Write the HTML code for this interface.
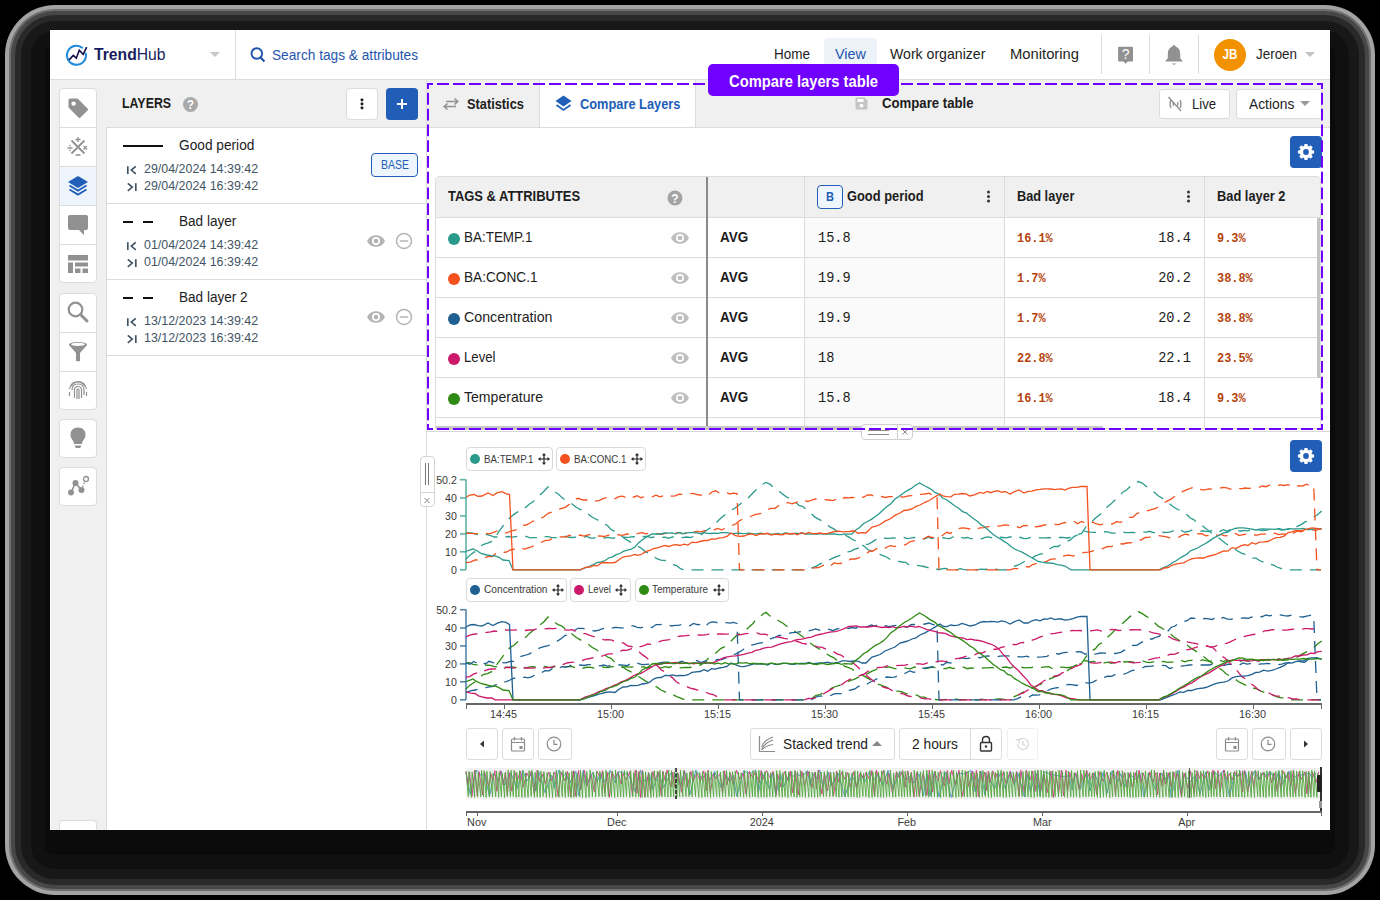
<!DOCTYPE html>
<html><head><meta charset="utf-8"><title>TrendHub</title>
<style>
html,body{margin:0;padding:0;}
body{width:1380px;height:900px;background:#000;position:relative;overflow:hidden;font-family:'Liberation Sans',sans-serif;}
body>div,body>span,body>svg{position:absolute;}
.t{white-space:nowrap;line-height:normal;display:inline-block;}
</style></head><body>
<div style="left:5px;top:5px;width:1370px;height:890px;border-radius:50px;background:rgb(163,163,163);"></div>
<div style="left:9px;top:9px;width:1362px;height:882px;border-radius:46px;background:rgb(110,110,110);"></div>
<div style="left:11px;top:11px;width:1358px;height:878px;border-radius:44px;background:rgb(71,71,71);"></div>
<div style="left:15px;top:15px;width:1350px;height:870px;border-radius:40px;background:rgb(41,41,41);"></div>
<div style="left:21px;top:21px;width:1338px;height:858px;border-radius:34px;background:rgb(24,24,24);"></div>
<div style="left:31px;top:31px;width:1318px;height:838px;border-radius:24px;background:rgb(16,16,16);"></div>
<div style="left:45px;top:45px;width:1290px;height:810px;border-radius:10px;background:rgb(11,11,11);"></div>
<div style="left:50px;top:30px;width:1280px;height:800px;background:#fff;"></div>
<div style="left:50px;top:79px;width:1280px;height:1px;background:#dcdcdc;"></div>
<svg style="left:64px;top:43px;" width="26" height="26" viewBox="0 0 26 26"><path d="M21.63 9.68 A9.50 9.50 0 1 1 18.73 5.13" fill="none" stroke="#1f8ad8" stroke-width="2"/><path d="M5.10 16.90 L9.30 12.40 L12.30 15.20 L15.30 7.20 L19.20 11.30 L22.70 4.20" fill="none" stroke="#120f4a" stroke-width="1.6"/></svg>
<span id="logo" class="t" style="left:94.2px;top:45.56px;font-size:16.00px;color:#171d5e;font-weight:400;font-family:'Liberation Sans',sans-serif;transform-origin:0 0;transform:scaleX(0.9805);"><b style="font-weight:700">Trend</b>Hub</span>
<svg style="left:209px;top:51px;" width="12" height="7" viewBox="0 0 12 7"><path d="M1 1 L11 1 L6 6 Z" fill="#c8c8c8"/></svg>
<div style="left:235px;top:30px;width:1px;height:49px;background:#dcdcdc;"></div>
<svg style="left:249px;top:46px;" width="17" height="17" viewBox="0 0 17 17"><circle cx="7.8" cy="7.5" r="5.3" fill="none" stroke="#1f56ad" stroke-width="1.9"/><path d="M11.6 11.4 L15.4 15.4" stroke="#1f56ad" stroke-width="2.2"/></svg>
<span id="search" class="t" style="left:271.7px;top:47.14px;font-size:14.60px;color:#1f56ad;font-weight:400;font-family:'Liberation Sans',sans-serif;transform-origin:0 0;transform:scaleX(0.9374);">Search tags &amp; attributes</span>
<div style="left:824px;top:38px;width:53px;height:41px;background:#eef3f9;border-radius:4px 4px 0 0;"></div>
<span id="nav_home" class="t" style="left:774.1px;top:45.84px;font-size:14.60px;color:#1d1d1d;font-weight:400;font-family:'Liberation Sans',sans-serif;transform-origin:0 0;transform:scaleX(0.9272);">Home</span>
<span id="nav_view" class="t" style="left:835.0px;top:45.84px;font-size:14.60px;color:#1f56ad;font-weight:400;font-family:'Liberation Sans',sans-serif;transform-origin:0 0;transform:scaleX(0.9881);">View</span>
<span id="nav_work" class="t" style="left:890.1px;top:45.84px;font-size:14.60px;color:#1d1d1d;font-weight:400;font-family:'Liberation Sans',sans-serif;transform-origin:0 0;transform:scaleX(0.9667);">Work organizer</span>
<span id="nav_mon" class="t" style="left:1010.2px;top:45.84px;font-size:14.60px;color:#1d1d1d;font-weight:400;font-family:'Liberation Sans',sans-serif;transform-origin:0 0;transform:scaleX(1.0126);">Monitoring</span>
<div style="left:1101px;top:35px;width:1px;height:39px;background:#dcdcdc;"></div>
<div style="left:1149px;top:35px;width:1px;height:39px;background:#dcdcdc;"></div>
<div style="left:1198px;top:35px;width:1px;height:39px;background:#dcdcdc;"></div>
<svg style="left:1116px;top:45px;" width="20" height="21" viewBox="0 0 20 21"><path d="M2.1 2.8 Q2.1 1.8 3.1 1.8 L16 1.8 Q17 1.8 17 2.8 L17 15.4 Q17 16.4 16 16.4 L11.7 16.4 L9.6 18.8 L7.5 16.4 L3.1 16.4 Q2.1 16.4 2.1 15.4 Z" fill="#919191"/><text x="9.6" y="14.2" font-family="Liberation Sans" font-weight="400" font-size="14" fill="#fff" text-anchor="middle">?</text></svg>
<svg style="left:1163px;top:43px;" width="22" height="23" viewBox="0 0 22 23"><path d="M11 1.8 Q12.2 2.6 13 3.8 Q17.2 5.2 17.2 11 L17.2 15.2 L20 18.6 L2 18.6 L4.8 15.2 L4.8 11 Q4.8 5.2 9 3.8 Q9.8 2.6 11 1.8 Z" fill="#919191"/><path d="M8.8 20.4 L13.2 20.4 L11 22 Z" fill="#919191"/></svg>
<svg style="left:1213px;top:38px;" width="34" height="34" viewBox="0 0 34 34"><circle cx="17" cy="17" r="16" fill="#f39200"/></svg>
<span id="jb" class="t" style="left:1230.0px;top:46.24px;font-size:14.60px;color:#fff;font-weight:700;font-family:'Liberation Sans',sans-serif;transform:translateX(-50%) scaleX(0.7933)">JB</span>
<span id="jeroen" class="t" style="left:1256.0px;top:45.84px;font-size:14.60px;color:#1d1d1d;font-weight:400;font-family:'Liberation Sans',sans-serif;transform-origin:0 0;transform:scaleX(0.9188);">Jeroen</span>
<svg style="left:1304px;top:51px;" width="12" height="7" viewBox="0 0 12 7"><path d="M1 1 L11 1 L6 6 Z" fill="#c3c3c3"/></svg>
<div style="left:51px;top:80px;width:56px;height:750px;background:#f0f0f0;"></div>
<div style="left:106px;top:127px;width:1px;height:703px;background:#dcdcdc;"></div>
<div style="left:59px;top:88px;width:38px;height:195px;background:#fff;border:1px solid #dcdcdc;border-radius:4px;box-sizing:border-box;"></div>
<div style="left:59px;top:127px;width:38px;height:1px;background:#dcdcdc;"></div>
<div style="left:59px;top:166px;width:38px;height:1px;background:#dcdcdc;"></div>
<div style="left:59px;top:205px;width:38px;height:1px;background:#dcdcdc;"></div>
<div style="left:59px;top:244px;width:38px;height:1px;background:#dcdcdc;"></div>
<div style="left:60px;top:167px;width:36px;height:38px;background:#eef4fb;"></div>
<div style="left:59px;top:292.5px;width:38px;height:117px;background:#fff;border:1px solid #dcdcdc;border-radius:4px;box-sizing:border-box;"></div>
<div style="left:59px;top:331.5px;width:38px;height:1px;background:#dcdcdc;"></div>
<div style="left:59px;top:370.5px;width:38px;height:1px;background:#dcdcdc;"></div>
<div style="left:59px;top:418.5px;width:38px;height:39px;background:#fff;border:1px solid #dcdcdc;border-radius:4px;box-sizing:border-box;"></div>
<div style="left:59px;top:466.5px;width:38px;height:39px;background:#fff;border:1px solid #dcdcdc;border-radius:4px;box-sizing:border-box;"></div>
<div style="left:59px;top:820px;width:38px;height:10px;background:#fff;border:1px solid #dcdcdc;border-radius:4px 4px 0 0;border-bottom:0;box-sizing:border-box;"></div>
<svg style="left:67px;top:97px;" width="22" height="22" viewBox="0 0 22 22"><path d="M1 2.5 Q1 1 2.5 1 L10 1 L20.3 11.3 Q21 12 20.3 12.7 L12.7 20.3 Q12 21 11.3 20.3 L1 10 Z" fill="#919191" transform="translate(0.5,0.5)"/><circle cx="6.6" cy="6.6" r="2.2" fill="#fff"/></svg>
<svg style="left:66px;top:136px;" width="24" height="24" viewBox="0 0 24 24"><path d="M5.5 4.5 L18.5 17.5 M18.5 4.5 L5.5 17.5" stroke="#919191" stroke-width="1.8"/><path d="M12 1 L12 6 M9.5 3.5 L14.5 3.5 M9.5 19 L14.5 19 M1.5 12 L6.5 12 M17.5 10 L21 13.5 M21 10 L17.5 13.5" stroke="#919191" stroke-width="1.3"/><circle cx="4" cy="9.6" r="0.8" fill="#919191"/><circle cx="4" cy="14.4" r="0.8" fill="#919191"/></svg>
<svg style="left:67px;top:175px;" width="22" height="22" viewBox="0 0 22 22"><path d="M11 1 L21 7 L11 13 L1 7 Z" fill="#215eb8"/><path d="M2.5 10.5 L11 15.6 L19.5 10.5 M2.5 14.5 L11 19.6 L19.5 14.5" fill="none" stroke="#215eb8" stroke-width="1.8"/></svg>
<svg style="left:67px;top:214px;" width="22" height="22" viewBox="0 0 22 22"><path d="M1 3 Q1 1 3 1 L19 1 Q21 1 21 3 L21 14 Q21 16 19 16 L17 16 L17 21 L12 16 L3 16 Q1 16 1 14 Z" fill="#919191"/></svg>
<svg style="left:67px;top:254px;" width="22" height="20" viewBox="0 0 22 20"><path d="M1 1 L21 1 L21 6.5 L1 6.5 Z M1 8.5 L6 8.5 L6 19 L1 19 Z M8 8.5 L21 8.5 L21 12.5 L8 12.5 Z M8 14.5 L13.5 14.5 L13.5 19 L8 19 Z M15.5 14.5 L21 14.5 L21 19 L15.5 19 Z" fill="#919191"/></svg>
<svg style="left:66px;top:300px;" width="24" height="24" viewBox="0 0 24 24"><circle cx="9.5" cy="9.5" r="6.8" fill="none" stroke="#919191" stroke-width="2.2"/><path d="M14.5 14.5 L21 21" stroke="#919191" stroke-width="3" stroke-linecap="round"/></svg>
<svg style="left:66px;top:340px;" width="24" height="24" viewBox="0 0 24 24"><ellipse cx="12" cy="4.5" rx="9" ry="2.6" fill="#919191"/><path d="M3 4.5 Q12 10 12 12 L12 21 Q12 22 13 21.5 L13 12 Q13 10 21 4.5" fill="#919191"/><path d="M3 5 L10 13 L10 21 L14 21 L14 13 L21 5 Z" fill="#919191"/><ellipse cx="12" cy="4.3" rx="7" ry="1.6" fill="#fff"/></svg>
<svg style="left:66px;top:378px;" width="24" height="24" viewBox="0 0 24 24"><g fill="none" stroke="#919191" stroke-width="1.2"><path d="M5 8 Q12 0 19 8"/><path d="M3.5 11 Q5 3.5 12 3.5 Q19 3.5 20.5 11"/><path d="M6 12 Q6 6 12 6 Q18 6 18 12 L18 17"/><path d="M8.5 20 L8.5 12 Q8.5 8.5 12 8.5 Q15.5 8.5 15.5 12 L15.5 20"/><path d="M11 21 L11 12 Q11 11 12 11 Q13 11 13 12 L13 21"/><path d="M3.5 14 L3.5 18"/><path d="M20.5 14 L20.5 18"/></g></svg>
<svg style="left:66px;top:426px;" width="24" height="24" viewBox="0 0 24 24"><path d="M12 1.5 Q19.5 1.5 19.5 9 Q19.5 12.5 16.5 15.5 L16 18 L8 18 L7.5 15.5 Q4.5 12.5 4.5 9 Q4.5 1.5 12 1.5 Z" fill="#919191"/><path d="M8.5 19.5 L15.5 19.5 L14 22 L10 22 Z" fill="#919191"/></svg>
<svg style="left:66px;top:474px;" width="24" height="24" viewBox="0 0 24 24"><g fill="#919191"><circle cx="5" cy="18.5" r="3"/><circle cx="9.5" cy="9" r="3"/><circle cx="15.5" cy="16" r="3"/></g><circle cx="20" cy="5" r="2.5" fill="none" stroke="#919191" stroke-width="1.3"/><path d="M5 18.5 L9.5 9 L15.5 16" stroke="#919191" stroke-width="1.6" fill="none"/><path d="M15.5 16 L19 7" stroke="#919191" stroke-width="1.3" stroke-dasharray="1.6 1.6" fill="none"/></svg>
<div style="left:107px;top:80px;width:319px;height:47px;background:#f0f0f0;"></div>
<div style="left:107px;top:127px;width:319px;height:1px;background:#dcdcdc;"></div>
<div style="left:426px;top:80px;width:1px;height:750px;background:#dcdcdc;"></div>
<span id="layers" class="t" style="left:122.2px;top:94.66px;font-size:14.80px;color:#1d1d1d;font-weight:700;font-family:'Liberation Sans',sans-serif;transform-origin:0 0;transform:scaleX(0.8368);">LAYERS</span>
<svg style="left:182px;top:96px;" width="17" height="17" viewBox="0 0 17 17"><circle cx="8.5" cy="8.5" r="7.5" fill="#a9a9a9"/><text x="8.5" y="13" font-family="Liberation Sans" font-weight="700" font-size="12" fill="#fff" text-anchor="middle">?</text></svg>
<div style="left:346px;top:88px;width:31.5px;height:31.5px;background:#fff;border:1px solid #dcdcdc;border-radius:4px;box-sizing:border-box;"></div>
<svg style="left:359px;top:96px;" width="6" height="16" viewBox="0 0 6 16"><rect x="1.7" y="2.6" width="2.6" height="2.6" rx="0.6" fill="#1a1a1a"/><rect x="1.7" y="6.6" width="2.6" height="2.6" rx="0.6" fill="#1a1a1a"/><rect x="1.7" y="10.6" width="2.6" height="2.6" rx="0.6" fill="#1a1a1a"/></svg>
<div style="left:386px;top:88px;width:32px;height:32px;background:#215eb8;border-radius:4px;"></div>
<svg style="left:394px;top:96px;" width="16" height="16" viewBox="0 0 16 16"><path d="M8 3 L8 13 M3 8 L13 8" stroke="#fff" stroke-width="2"/></svg>
<div style="left:107px;top:203px;width:319px;height:1px;background:#dcdcdc;"></div>
<div style="left:107px;top:279px;width:319px;height:1px;background:#dcdcdc;"></div>
<div style="left:107px;top:355px;width:319px;height:1px;background:#dcdcdc;"></div>
<div style="left:122.7px;top:144.6px;width:40.3px;height:2.5px;background:#111;"></div>
<div style="left:123px;top:220.8px;width:10px;height:2px;background:#111;"></div>
<div style="left:143px;top:220.8px;width:10px;height:2px;background:#111;"></div>
<div style="left:123px;top:296.8px;width:10px;height:2px;background:#111;"></div>
<div style="left:143px;top:296.8px;width:10px;height:2px;background:#111;"></div>
<span id="lname0" class="t" style="left:179.4px;top:136.39px;font-size:15.20px;color:#1d1d1d;font-weight:400;font-family:'Liberation Sans',sans-serif;transform-origin:0 0;transform:scaleX(0.9020);">Good period</span>
<span id="ld1_0" class="t" style="left:144.3px;top:161.32px;font-size:13.20px;color:#435465;font-weight:400;font-family:'Liberation Sans',sans-serif;transform-origin:0 0;transform:scaleX(0.9430);">29/04/2024 14:39:42</span>
<span id="ld2_0" class="t" style="left:144.3px;top:178.12px;font-size:13.20px;color:#435465;font-weight:400;font-family:'Liberation Sans',sans-serif;transform-origin:0 0;transform:scaleX(0.9430);">29/04/2024 16:39:42</span>
<svg style="left:126px;top:165px;" width="12" height="10" viewBox="0 0 12 10"><path d="M1.8 1.2 L1.8 9" stroke="#435465" stroke-width="1.7"/><path d="M9.8 1.3 L5.3 5.1 L9.8 8.9" fill="none" stroke="#435465" stroke-width="1.6"/></svg>
<svg style="left:126px;top:182px;" width="12" height="10" viewBox="0 0 12 10"><path d="M9.8 1.2 L9.8 9" stroke="#435465" stroke-width="1.7"/><path d="M1.8 1.3 L6.3 5.1 L1.8 8.9" fill="none" stroke="#435465" stroke-width="1.6"/></svg>
<span id="lname1" class="t" style="left:179.4px;top:212.39px;font-size:15.20px;color:#1d1d1d;font-weight:400;font-family:'Liberation Sans',sans-serif;transform-origin:0 0;transform:scaleX(0.8944);">Bad layer</span>
<span id="ld1_1" class="t" style="left:144.3px;top:237.32px;font-size:13.20px;color:#435465;font-weight:400;font-family:'Liberation Sans',sans-serif;transform-origin:0 0;transform:scaleX(0.9430);">01/04/2024 14:39:42</span>
<span id="ld2_1" class="t" style="left:144.3px;top:254.12px;font-size:13.20px;color:#435465;font-weight:400;font-family:'Liberation Sans',sans-serif;transform-origin:0 0;transform:scaleX(0.9430);">01/04/2024 16:39:42</span>
<svg style="left:126px;top:241px;" width="12" height="10" viewBox="0 0 12 10"><path d="M1.8 1.2 L1.8 9" stroke="#435465" stroke-width="1.7"/><path d="M9.8 1.3 L5.3 5.1 L9.8 8.9" fill="none" stroke="#435465" stroke-width="1.6"/></svg>
<svg style="left:126px;top:258px;" width="12" height="10" viewBox="0 0 12 10"><path d="M9.8 1.2 L9.8 9" stroke="#435465" stroke-width="1.7"/><path d="M1.8 1.3 L6.3 5.1 L1.8 8.9" fill="none" stroke="#435465" stroke-width="1.6"/></svg>
<span id="lname2" class="t" style="left:179.4px;top:288.39px;font-size:15.20px;color:#1d1d1d;font-weight:400;font-family:'Liberation Sans',sans-serif;transform-origin:0 0;transform:scaleX(0.8929);">Bad layer 2</span>
<span id="ld1_2" class="t" style="left:144.3px;top:313.32px;font-size:13.20px;color:#435465;font-weight:400;font-family:'Liberation Sans',sans-serif;transform-origin:0 0;transform:scaleX(0.9430);">13/12/2023 14:39:42</span>
<span id="ld2_2" class="t" style="left:144.3px;top:330.12px;font-size:13.20px;color:#435465;font-weight:400;font-family:'Liberation Sans',sans-serif;transform-origin:0 0;transform:scaleX(0.9430);">13/12/2023 16:39:42</span>
<svg style="left:126px;top:317px;" width="12" height="10" viewBox="0 0 12 10"><path d="M1.8 1.2 L1.8 9" stroke="#435465" stroke-width="1.7"/><path d="M9.8 1.3 L5.3 5.1 L9.8 8.9" fill="none" stroke="#435465" stroke-width="1.6"/></svg>
<svg style="left:126px;top:334px;" width="12" height="10" viewBox="0 0 12 10"><path d="M9.8 1.2 L9.8 9" stroke="#435465" stroke-width="1.7"/><path d="M1.8 1.3 L6.3 5.1 L1.8 8.9" fill="none" stroke="#435465" stroke-width="1.6"/></svg>
<div style="left:371px;top:153px;width:47px;height:24px;background:#eff5fc;border:1.5px solid #215eb8;border-radius:4px;box-sizing:border-box;"></div>
<span id="base" class="t" style="left:394.5px;top:158.07px;font-size:12.60px;color:#215eb8;font-weight:400;font-family:'Liberation Sans',sans-serif;transform:translateX(-50%) scaleX(0.8331)">BASE</span>
<svg style="left:366px;top:234px;" width="20" height="14" viewBox="0 0 20 14"><path d="M1 7 C4.5 -0.8 15.5 -0.8 19 7 C15.5 14.8 4.5 14.8 1 7 Z" fill="#b4b4b4"/><circle cx="10" cy="7" r="4" fill="#fff"/><circle cx="10" cy="7" r="2.3" fill="#b4b4b4"/></svg>
<svg style="left:394px;top:231px;" width="20" height="20" viewBox="0 0 20 20"><circle cx="10" cy="10" r="7.5" fill="none" stroke="#b4b4b4" stroke-width="1.5"/><path d="M5.8 10 L14.2 10" stroke="#b4b4b4" stroke-width="1.5"/></svg>
<svg style="left:366px;top:310px;" width="20" height="14" viewBox="0 0 20 14"><path d="M1 7 C4.5 -0.8 15.5 -0.8 19 7 C15.5 14.8 4.5 14.8 1 7 Z" fill="#b4b4b4"/><circle cx="10" cy="7" r="4" fill="#fff"/><circle cx="10" cy="7" r="2.3" fill="#b4b4b4"/></svg>
<svg style="left:394px;top:307px;" width="20" height="20" viewBox="0 0 20 20"><circle cx="10" cy="10" r="7.5" fill="none" stroke="#b4b4b4" stroke-width="1.5"/><path d="M5.8 10 L14.2 10" stroke="#b4b4b4" stroke-width="1.5"/></svg>
<div style="left:427px;top:80px;width:903px;height:47px;background:#f0f0f0;"></div>
<div style="left:427px;top:127px;width:903px;height:1px;background:#dcdcdc;"></div>
<div style="left:540px;top:80px;width:155px;height:47px;background:#fff;"></div>
<div style="left:539px;top:80px;width:1px;height:47px;background:#dcdcdc;"></div>
<div style="left:695px;top:80px;width:1px;height:47px;background:#dcdcdc;"></div>
<svg style="left:442px;top:95px;" width="18" height="18" viewBox="0 0 18 18"><path d="M4 6.5 L15.5 6.5 M12.5 3.5 L15.8 6.5 L12.5 9.5 M14 11.5 L2.5 11.5 M5.5 8.5 L2.2 11.5 L5.5 14.5" fill="none" stroke="#939393" stroke-width="1.6"/></svg>
<span id="tab_stat" class="t" style="left:467.4px;top:96.06px;font-size:14.80px;color:#1d1d1d;font-weight:700;font-family:'Liberation Sans',sans-serif;transform-origin:0 0;transform:scaleX(0.8648);">Statistics</span>
<svg style="left:555px;top:95px;" width="18" height="18" viewBox="0 0 18 18"><path d="M8.5 0.5 L16.5 6 L8.5 11.5 L0.5 6 Z" fill="#215eb8"/><path d="M1.5 10 L8.5 15 L15.5 10" fill="none" stroke="#215eb8" stroke-width="1.8"/></svg>
<span id="tab_cmp" class="t" style="left:579.8px;top:96.06px;font-size:14.80px;color:#215eb8;font-weight:700;font-family:'Liberation Sans',sans-serif;transform-origin:0 0;transform:scaleX(0.8657);">Compare Layers</span>
<svg style="left:855px;top:97px;" width="13" height="13" viewBox="0 0 13 13"><path d="M0.5 1.5 Q0.5 0.5 1.5 0.5 L9.5 0.5 L12.5 3.5 L12.5 11.5 Q12.5 12.5 11.5 12.5 L1.5 12.5 Q0.5 12.5 0.5 11.5 Z" fill="#c4c4c4"/><rect x="2.5" y="2" width="6" height="3" fill="#fff"/><circle cx="6.5" cy="8.6" r="1.9" fill="#fff"/></svg>
<span id="tab_ct" class="t" style="left:881.7px;top:94.76px;font-size:14.80px;color:#1d1d1d;font-weight:700;font-family:'Liberation Sans',sans-serif;transform-origin:0 0;transform:scaleX(0.8911);">Compare table</span>
<div style="left:1158.5px;top:89px;width:71px;height:30px;background:#fff;border:1px solid #dcdcdc;border-radius:3px;box-sizing:border-box;"></div>
<svg style="left:1167px;top:96px;" width="17" height="16" viewBox="0 0 17 16"><g fill="none" stroke="#8f8f8f" stroke-width="1.3"><path d="M4 4 Q2 8 4 12"/><path d="M13 4 Q15 8 13 12"/><path d="M6.5 6 Q5.5 8 6.5 10"/><path d="M10.5 6 Q11.5 8 10.5 10"/><path d="M1.5 1 L14 15"/></g></svg>
<span id="live" class="t" style="left:1191.9px;top:96.46px;font-size:14.80px;color:#1d1d1d;font-weight:400;font-family:'Liberation Sans',sans-serif;transform-origin:0 0;transform:scaleX(0.8911);">Live</span>
<div style="left:1236px;top:89px;width:86px;height:30px;background:#fff;border:1px solid #dcdcdc;border-radius:3px;box-sizing:border-box;"></div>
<span id="actions" class="t" style="left:1249.0px;top:96.46px;font-size:14.80px;color:#1d1d1d;font-weight:400;font-family:'Liberation Sans',sans-serif;transform-origin:0 0;transform:scaleX(0.9334);">Actions</span>
<svg style="left:1299px;top:100px;" width="12" height="7" viewBox="0 0 12 7"><path d="M1 1 L11 1 L6 6 Z" fill="#999"/></svg>
<div style="left:1290px;top:136px;width:32px;height:32px;background:#215eb8;border-radius:4px;"></div>
<svg style="left:1290px;top:136px;" width="32" height="32" viewBox="0 0 32 32"><path d="M14.26 9.94 L14.44 7.95 L17.56 7.95 L17.74 9.94 L19.05 10.49 L20.59 9.20 L22.80 11.41 L21.51 12.95 L22.06 14.26 L24.05 14.44 L24.05 17.56 L22.06 17.74 L21.51 19.05 L22.80 20.59 L20.59 22.80 L19.05 21.51 L17.74 22.06 L17.56 24.05 L14.44 24.05 L14.26 22.06 L12.95 21.51 L11.41 22.80 L9.20 20.59 L10.49 19.05 L9.94 17.74 L7.95 17.56 L7.95 14.44 L9.94 14.26 L10.49 12.95 L9.20 11.41 L11.41 9.20 L12.95 10.49 Z" fill="#fff"/><circle cx="16" cy="16" r="2.9" fill="#215eb8"/></svg>
<div style="left:435px;top:176px;width:886px;height:253px;border:1px solid #dcdcdc;border-radius:4px 4px 0 0;box-sizing:border-box;background:#fff;"></div>
<div style="left:436px;top:177px;width:884px;height:40px;background:#f0f0f0;border-radius:3px 3px 0 0;"></div>
<div style="left:805px;top:217px;width:199px;height:212px;background:#fafafa;"></div>
<div style="left:436px;top:217px;width:884px;height:1px;background:#dcdcdc;"></div>
<div style="left:436px;top:257px;width:884px;height:1px;background:#dcdcdc;"></div>
<div style="left:436px;top:297px;width:884px;height:1px;background:#dcdcdc;"></div>
<div style="left:436px;top:337px;width:884px;height:1px;background:#dcdcdc;"></div>
<div style="left:436px;top:377px;width:884px;height:1px;background:#dcdcdc;"></div>
<div style="left:436px;top:417px;width:884px;height:1px;background:#dcdcdc;"></div>
<div style="left:706px;top:177px;width:2px;height:252px;background:#8a8a8a;"></div>
<div style="left:804px;top:177px;width:1px;height:252px;background:#dcdcdc;"></div>
<div style="left:1004px;top:177px;width:1px;height:252px;background:#dcdcdc;"></div>
<div style="left:1204px;top:177px;width:1px;height:252px;background:#dcdcdc;"></div>
<div style="left:1317px;top:218px;width:3px;height:160px;background:#c1c1c1;"></div>
<div style="left:436px;top:426px;width:667px;height:4px;background:#c6c6c6;"></div>
<div style="left:427px;top:431px;width:903px;height:1px;background:#d8d8d8;"></div>
<span id="th_tags" class="t" style="left:447.9px;top:187.65px;font-size:14.70px;color:#1d1d1d;font-weight:700;font-family:'Liberation Sans',sans-serif;transform-origin:0 0;transform:scaleX(0.8815);">TAGS &amp; ATTRIBUTES</span>
<svg style="left:667px;top:190px;" width="17" height="17" viewBox="0 0 17 17"><circle cx="8" cy="8" r="7.5" fill="#a3a3a3"/><text x="8" y="12.5" font-family="Liberation Sans" font-weight="700" font-size="12" fill="#fff" text-anchor="middle">?</text></svg>
<div style="left:817px;top:185px;width:26px;height:24px;background:#eff5fc;border:1.5px solid #215eb8;border-radius:4px;box-sizing:border-box;"></div>
<span id="th_b" class="t" style="left:830.0px;top:190.16px;font-size:12.50px;color:#215eb8;font-weight:700;font-family:'Liberation Sans',sans-serif;transform:translateX(-50%) scaleX(0.8858)">B</span>
<span id="th_gp" class="t" style="left:847.2px;top:187.65px;font-size:14.70px;color:#1d1d1d;font-weight:700;font-family:'Liberation Sans',sans-serif;transform-origin:0 0;transform:scaleX(0.8762);">Good period</span>
<span id="th_bl" class="t" style="left:1017.2px;top:187.65px;font-size:14.70px;color:#1d1d1d;font-weight:700;font-family:'Liberation Sans',sans-serif;transform-origin:0 0;transform:scaleX(0.8679);">Bad layer</span>
<span id="th_bl2" class="t" style="left:1217.2px;top:187.65px;font-size:14.70px;color:#1d1d1d;font-weight:700;font-family:'Liberation Sans',sans-serif;transform-origin:0 0;transform:scaleX(0.8739);">Bad layer 2</span>
<svg style="left:986px;top:189px;" width="5" height="16" viewBox="0 0 5 16"><circle cx="2.5" cy="3" r="1.5" fill="#333"/><circle cx="2.5" cy="7.5" r="1.5" fill="#333"/><circle cx="2.5" cy="12" r="1.5" fill="#333"/></svg>
<svg style="left:1186px;top:189px;" width="5" height="16" viewBox="0 0 5 16"><circle cx="2.5" cy="3" r="1.5" fill="#333"/><circle cx="2.5" cy="7.5" r="1.5" fill="#333"/><circle cx="2.5" cy="12" r="1.5" fill="#333"/></svg>
<svg style="left:448px;top:233.0px;" width="12" height="12" viewBox="0 0 12 12"><circle cx="6" cy="6" r="6" fill="#2a9a8c"/></svg>
<span id="rn0" class="t" style="left:464.3px;top:228.62px;font-size:14.30px;color:#1d1d1d;font-weight:400;font-family:'Liberation Sans',sans-serif;transform-origin:0 0;transform:scaleX(0.9404);">BA:TEMP.1</span>
<svg style="left:670px;top:231.2px;" width="20" height="14" viewBox="0 0 20 14"><path d="M1 7 C4.5 -0.8 15.5 -0.8 19 7 C15.5 14.8 4.5 14.8 1 7 Z" fill="#bdbdbd"/><circle cx="10" cy="7" r="4" fill="#fff"/><circle cx="10" cy="7" r="2.3" fill="#bdbdbd"/></svg>
<span id="avg0" class="t" style="left:720.0px;top:228.62px;font-size:14.30px;color:#1d1d1d;font-weight:700;font-family:'Liberation Sans',sans-serif;transform-origin:0 0;transform:scaleX(0.9424);">AVG</span>
<span id="v1_0" class="t" style="left:817.6px;top:230.16px;font-size:14.50px;color:#1d1d1d;font-weight:400;font-family:'Liberation Mono',monospace;transform-origin:0 0;transform:scaleX(0.9388);">15.8</span>
<span id="p1_0" class="t" style="left:1017.0px;top:231.54px;font-size:12.60px;color:#b5430c;font-weight:700;font-family:'Liberation Mono',monospace;transform-origin:0 0;transform:scaleX(0.9445);">16.1%</span>
<span id="v2_0" class="t" style="right:189.0px;top:230.16px;font-size:14.50px;color:#1d1d1d;font-weight:400;font-family:'Liberation Mono',monospace;transform-origin:100% 0;transform:scaleX(0.9388);">18.4</span>
<span id="p2_0" class="t" style="left:1217.0px;top:231.54px;font-size:12.60px;color:#b5430c;font-weight:700;font-family:'Liberation Mono',monospace;transform-origin:0 0;transform:scaleX(0.9446);">9.3%</span>
<svg style="left:448px;top:273.0px;" width="12" height="12" viewBox="0 0 12 12"><circle cx="6" cy="6" r="6" fill="#f4511e"/></svg>
<span id="rn1" class="t" style="left:464.3px;top:268.62px;font-size:14.30px;color:#1d1d1d;font-weight:400;font-family:'Liberation Sans',sans-serif;transform-origin:0 0;transform:scaleX(0.9538);">BA:CONC.1</span>
<svg style="left:670px;top:271.2px;" width="20" height="14" viewBox="0 0 20 14"><path d="M1 7 C4.5 -0.8 15.5 -0.8 19 7 C15.5 14.8 4.5 14.8 1 7 Z" fill="#bdbdbd"/><circle cx="10" cy="7" r="4" fill="#fff"/><circle cx="10" cy="7" r="2.3" fill="#bdbdbd"/></svg>
<span id="avg1" class="t" style="left:720.0px;top:268.62px;font-size:14.30px;color:#1d1d1d;font-weight:700;font-family:'Liberation Sans',sans-serif;transform-origin:0 0;transform:scaleX(0.9424);">AVG</span>
<span id="v1_1" class="t" style="left:817.6px;top:270.16px;font-size:14.50px;color:#1d1d1d;font-weight:400;font-family:'Liberation Mono',monospace;transform-origin:0 0;transform:scaleX(0.9388);">19.9</span>
<span id="p1_1" class="t" style="left:1017.0px;top:271.54px;font-size:12.60px;color:#b5430c;font-weight:700;font-family:'Liberation Mono',monospace;transform-origin:0 0;transform:scaleX(0.9446);">1.7%</span>
<span id="v2_1" class="t" style="right:189.0px;top:270.16px;font-size:14.50px;color:#1d1d1d;font-weight:400;font-family:'Liberation Mono',monospace;transform-origin:100% 0;transform:scaleX(0.9388);">20.2</span>
<span id="p2_1" class="t" style="left:1217.0px;top:271.54px;font-size:12.60px;color:#b5430c;font-weight:700;font-family:'Liberation Mono',monospace;transform-origin:0 0;transform:scaleX(0.9445);">38.8%</span>
<svg style="left:448px;top:313.0px;" width="12" height="12" viewBox="0 0 12 12"><circle cx="6" cy="6" r="6" fill="#1f6091"/></svg>
<span id="rn2" class="t" style="left:464.3px;top:308.62px;font-size:14.30px;color:#1d1d1d;font-weight:400;font-family:'Liberation Sans',sans-serif;transform-origin:0 0;transform:scaleX(0.9942);">Concentration</span>
<svg style="left:670px;top:311.2px;" width="20" height="14" viewBox="0 0 20 14"><path d="M1 7 C4.5 -0.8 15.5 -0.8 19 7 C15.5 14.8 4.5 14.8 1 7 Z" fill="#bdbdbd"/><circle cx="10" cy="7" r="4" fill="#fff"/><circle cx="10" cy="7" r="2.3" fill="#bdbdbd"/></svg>
<span id="avg2" class="t" style="left:720.0px;top:308.62px;font-size:14.30px;color:#1d1d1d;font-weight:700;font-family:'Liberation Sans',sans-serif;transform-origin:0 0;transform:scaleX(0.9424);">AVG</span>
<span id="v1_2" class="t" style="left:817.6px;top:310.16px;font-size:14.50px;color:#1d1d1d;font-weight:400;font-family:'Liberation Mono',monospace;transform-origin:0 0;transform:scaleX(0.9388);">19.9</span>
<span id="p1_2" class="t" style="left:1017.0px;top:311.54px;font-size:12.60px;color:#b5430c;font-weight:700;font-family:'Liberation Mono',monospace;transform-origin:0 0;transform:scaleX(0.9446);">1.7%</span>
<span id="v2_2" class="t" style="right:189.0px;top:310.16px;font-size:14.50px;color:#1d1d1d;font-weight:400;font-family:'Liberation Mono',monospace;transform-origin:100% 0;transform:scaleX(0.9388);">20.2</span>
<span id="p2_2" class="t" style="left:1217.0px;top:311.54px;font-size:12.60px;color:#b5430c;font-weight:700;font-family:'Liberation Mono',monospace;transform-origin:0 0;transform:scaleX(0.9445);">38.8%</span>
<svg style="left:448px;top:353.0px;" width="12" height="12" viewBox="0 0 12 12"><circle cx="6" cy="6" r="6" fill="#cc1a6a"/></svg>
<span id="rn3" class="t" style="left:464.3px;top:348.62px;font-size:14.30px;color:#1d1d1d;font-weight:400;font-family:'Liberation Sans',sans-serif;transform-origin:0 0;transform:scaleX(0.9214);">Level</span>
<svg style="left:670px;top:351.2px;" width="20" height="14" viewBox="0 0 20 14"><path d="M1 7 C4.5 -0.8 15.5 -0.8 19 7 C15.5 14.8 4.5 14.8 1 7 Z" fill="#bdbdbd"/><circle cx="10" cy="7" r="4" fill="#fff"/><circle cx="10" cy="7" r="2.3" fill="#bdbdbd"/></svg>
<span id="avg3" class="t" style="left:720.0px;top:348.62px;font-size:14.30px;color:#1d1d1d;font-weight:700;font-family:'Liberation Sans',sans-serif;transform-origin:0 0;transform:scaleX(0.9424);">AVG</span>
<span id="v1_3" class="t" style="left:817.6px;top:350.16px;font-size:14.50px;color:#1d1d1d;font-weight:400;font-family:'Liberation Mono',monospace;transform-origin:0 0;transform:scaleX(0.9388);">18</span>
<span id="p1_3" class="t" style="left:1017.0px;top:351.54px;font-size:12.60px;color:#b5430c;font-weight:700;font-family:'Liberation Mono',monospace;transform-origin:0 0;transform:scaleX(0.9445);">22.8%</span>
<span id="v2_3" class="t" style="right:189.0px;top:350.16px;font-size:14.50px;color:#1d1d1d;font-weight:400;font-family:'Liberation Mono',monospace;transform-origin:100% 0;transform:scaleX(0.9388);">22.1</span>
<span id="p2_3" class="t" style="left:1217.0px;top:351.54px;font-size:12.60px;color:#b5430c;font-weight:700;font-family:'Liberation Mono',monospace;transform-origin:0 0;transform:scaleX(0.9445);">23.5%</span>
<svg style="left:448px;top:393.0px;" width="12" height="12" viewBox="0 0 12 12"><circle cx="6" cy="6" r="6" fill="#2e8a12"/></svg>
<span id="rn4" class="t" style="left:464.3px;top:388.62px;font-size:14.30px;color:#1d1d1d;font-weight:400;font-family:'Liberation Sans',sans-serif;transform-origin:0 0;transform:scaleX(0.9842);">Temperature</span>
<svg style="left:670px;top:391.2px;" width="20" height="14" viewBox="0 0 20 14"><path d="M1 7 C4.5 -0.8 15.5 -0.8 19 7 C15.5 14.8 4.5 14.8 1 7 Z" fill="#bdbdbd"/><circle cx="10" cy="7" r="4" fill="#fff"/><circle cx="10" cy="7" r="2.3" fill="#bdbdbd"/></svg>
<span id="avg4" class="t" style="left:720.0px;top:388.62px;font-size:14.30px;color:#1d1d1d;font-weight:700;font-family:'Liberation Sans',sans-serif;transform-origin:0 0;transform:scaleX(0.9424);">AVG</span>
<span id="v1_4" class="t" style="left:817.6px;top:390.16px;font-size:14.50px;color:#1d1d1d;font-weight:400;font-family:'Liberation Mono',monospace;transform-origin:0 0;transform:scaleX(0.9388);">15.8</span>
<span id="p1_4" class="t" style="left:1017.0px;top:391.54px;font-size:12.60px;color:#b5430c;font-weight:700;font-family:'Liberation Mono',monospace;transform-origin:0 0;transform:scaleX(0.9445);">16.1%</span>
<span id="v2_4" class="t" style="right:189.0px;top:390.16px;font-size:14.50px;color:#1d1d1d;font-weight:400;font-family:'Liberation Mono',monospace;transform-origin:100% 0;transform:scaleX(0.9388);">18.4</span>
<span id="p2_4" class="t" style="left:1217.0px;top:391.54px;font-size:12.60px;color:#b5430c;font-weight:700;font-family:'Liberation Mono',monospace;transform-origin:0 0;transform:scaleX(0.9446);">9.3%</span>
<div style="left:861px;top:424px;width:52px;height:16px;background:#fff;border:1px solid #cfcfcf;border-radius:4px;box-sizing:border-box;"></div>
<div style="left:897px;top:424px;width:1px;height:16px;background:#cfcfcf;"></div>
<div style="left:868px;top:430px;width:21px;height:1px;background:#888;"></div>
<div style="left:868px;top:434px;width:21px;height:1px;background:#888;"></div>
<svg style="left:900px;top:427px;" width="10" height="10" viewBox="0 0 10 10"><path d="M2.5 2.5 L7.5 7.5 M7.5 2.5 L2.5 7.5" stroke="#888" stroke-width="1"/></svg>
<svg style="left:420px;top:76px;" width="910" height="360" viewBox="0 0 910 360"><g stroke="#7000ff" stroke-width="2" fill="none"><path d="M7 8 L903 8" stroke-dasharray="12 4" stroke-dashoffset="6"/><path d="M7 353 L903 353" stroke-dasharray="12 4" stroke-dashoffset="6"/><path d="M8 7 L8 354" stroke-dasharray="11.830 3.943" stroke-dashoffset="5.915"/><path d="M902 7 L902 354" stroke-dasharray="11.830 3.943" stroke-dashoffset="5.915"/></g></svg>
<div style="left:708px;top:64px;width:191px;height:32px;background:#7000ff;border-radius:5px;"></div>
<span id="label" class="t" style="left:729.0px;top:70.76px;font-size:17.20px;color:#fff;font-weight:700;font-family:'Liberation Sans',sans-serif;transform-origin:0 0;transform:scaleX(0.8569);">Compare layers table</span>
<div style="left:420px;top:456px;width:15px;height:51px;background:#fff;border:1px solid #d4d4d4;border-radius:4px;box-sizing:border-box;"></div>
<div style="left:420px;top:492px;width:15px;height:1px;background:#d4d4d4;"></div>
<div style="left:425px;top:463px;width:1px;height:22px;background:#777;"></div>
<div style="left:428px;top:463px;width:1px;height:22px;background:#777;"></div>
<svg style="left:422px;top:495px;" width="10" height="10" viewBox="0 0 10 10"><path d="M2.5 3 L7.5 8 M7.5 3 L2.5 8" stroke="#888" stroke-width="1"/></svg>
<div style="left:1290px;top:440px;width:32px;height:32px;background:#215eb8;border-radius:4px;"></div>
<svg style="left:1290px;top:440px;" width="32" height="32" viewBox="0 0 32 32"><path d="M14.26 9.94 L14.44 7.95 L17.56 7.95 L17.74 9.94 L19.05 10.49 L20.59 9.20 L22.80 11.41 L21.51 12.95 L22.06 14.26 L24.05 14.44 L24.05 17.56 L22.06 17.74 L21.51 19.05 L22.80 20.59 L20.59 22.80 L19.05 21.51 L17.74 22.06 L17.56 24.05 L14.44 24.05 L14.26 22.06 L12.95 21.51 L11.41 22.80 L9.20 20.59 L10.49 19.05 L9.94 17.74 L7.95 17.56 L7.95 14.44 L9.94 14.26 L10.49 12.95 L9.20 11.41 L11.41 9.20 L12.95 10.49 Z" fill="#fff"/><circle cx="16" cy="16" r="2.9" fill="#215eb8"/></svg>
<div style="left:466px;top:447px;width:87px;height:24px;background:#fff;border:1px solid #dadada;border-radius:4px;box-sizing:border-box;"></div>
<svg style="left:470px;top:454px;" width="10" height="10" viewBox="0 0 10 10"><circle cx="5" cy="5" r="5" fill="#2a9a8c"/></svg>
<span id="c1" class="t" style="left:483.8px;top:452.78px;font-size:11.50px;color:#3a3a3a;font-weight:400;font-family:'Liberation Sans',sans-serif;transform-origin:0 0;transform:scaleX(0.8448);">BA:TEMP.1</span>
<svg style="left:537.5px;top:453px;" width="12" height="12" viewBox="0 0 12 12"><path d="M6 1.5 L6 10.5 M1.5 6 L10.5 6" stroke="#222" stroke-width="1.2"/><path d="M6 0 L8 2.5 L4 2.5 Z M6 12 L8 9.5 L4 9.5 Z M0 6 L2.5 4 L2.5 8 Z M12 6 L9.5 4 L9.5 8 Z" fill="#222"/></svg>
<div style="left:556px;top:447px;width:90px;height:24px;background:#fff;border:1px solid #dadada;border-radius:4px;box-sizing:border-box;"></div>
<svg style="left:560px;top:454px;" width="10" height="10" viewBox="0 0 10 10"><circle cx="5" cy="5" r="5" fill="#f4511e"/></svg>
<span id="c2" class="t" style="left:573.8px;top:452.78px;font-size:11.50px;color:#3a3a3a;font-weight:400;font-family:'Liberation Sans',sans-serif;transform-origin:0 0;transform:scaleX(0.8467);">BA:CONC.1</span>
<svg style="left:630.5px;top:453px;" width="12" height="12" viewBox="0 0 12 12"><path d="M6 1.5 L6 10.5 M1.5 6 L10.5 6" stroke="#222" stroke-width="1.2"/><path d="M6 0 L8 2.5 L4 2.5 Z M6 12 L8 9.5 L4 9.5 Z M0 6 L2.5 4 L2.5 8 Z M12 6 L9.5 4 L9.5 8 Z" fill="#222"/></svg>
<div style="left:465.7px;top:577.7px;width:101.5px;height:24px;background:#fff;border:1px solid #dadada;border-radius:4px;box-sizing:border-box;"></div>
<svg style="left:469.7px;top:584.7px;" width="10" height="10" viewBox="0 0 10 10"><circle cx="5" cy="5" r="5" fill="#1f6091"/></svg>
<span id="c3" class="t" style="left:483.5px;top:583.48px;font-size:11.50px;color:#3a3a3a;font-weight:400;font-family:'Liberation Sans',sans-serif;transform-origin:0 0;transform:scaleX(0.8867);">Concentration</span>
<svg style="left:551.7px;top:583.7px;" width="12" height="12" viewBox="0 0 12 12"><path d="M6 1.5 L6 10.5 M1.5 6 L10.5 6" stroke="#222" stroke-width="1.2"/><path d="M6 0 L8 2.5 L4 2.5 Z M6 12 L8 9.5 L4 9.5 Z M0 6 L2.5 4 L2.5 8 Z M12 6 L9.5 4 L9.5 8 Z" fill="#222"/></svg>
<div style="left:570.3px;top:577.7px;width:60.5px;height:24px;background:#fff;border:1px solid #dadada;border-radius:4px;box-sizing:border-box;"></div>
<svg style="left:574.3px;top:584.7px;" width="10" height="10" viewBox="0 0 10 10"><circle cx="5" cy="5" r="5" fill="#cc1a6a"/></svg>
<span id="c4" class="t" style="left:588.1px;top:583.48px;font-size:11.50px;color:#3a3a3a;font-weight:400;font-family:'Liberation Sans',sans-serif;transform-origin:0 0;transform:scaleX(0.8364);">Level</span>
<svg style="left:615.3px;top:583.7px;" width="12" height="12" viewBox="0 0 12 12"><path d="M6 1.5 L6 10.5 M1.5 6 L10.5 6" stroke="#222" stroke-width="1.2"/><path d="M6 0 L8 2.5 L4 2.5 Z M6 12 L8 9.5 L4 9.5 Z M0 6 L2.5 4 L2.5 8 Z M12 6 L9.5 4 L9.5 8 Z" fill="#222"/></svg>
<div style="left:634.5px;top:577.7px;width:94px;height:24px;background:#fff;border:1px solid #dadada;border-radius:4px;box-sizing:border-box;"></div>
<svg style="left:638.5px;top:584.7px;" width="10" height="10" viewBox="0 0 10 10"><circle cx="5" cy="5" r="5" fill="#2e8a12"/></svg>
<span id="c5" class="t" style="left:652.3px;top:583.48px;font-size:11.50px;color:#3a3a3a;font-weight:400;font-family:'Liberation Sans',sans-serif;transform-origin:0 0;transform:scaleX(0.8674);">Temperature</span>
<svg style="left:713.0px;top:583.7px;" width="12" height="12" viewBox="0 0 12 12"><path d="M6 1.5 L6 10.5 M1.5 6 L10.5 6" stroke="#222" stroke-width="1.2"/><path d="M6 0 L8 2.5 L4 2.5 Z M6 12 L8 9.5 L4 9.5 Z M0 6 L2.5 4 L2.5 8 Z M12 6 L9.5 4 L9.5 8 Z" fill="#222"/></svg>
<svg style="left:0px;top:0px;pointer-events:none;" width="1380" height="900" viewBox="0 0 1380 900"><path d="M466 479.6 L466 569.8" stroke="#2a9a8c" stroke-width="1.6" opacity="0.75"/><path d="M460 479.7 L466 479.7" stroke="#2a9a8c" stroke-width="1.6" opacity="0.75"/><path d="M460 498.0 L466 498.0" stroke="#2a9a8c" stroke-width="1.6" opacity="0.75"/><path d="M460 515.9 L466 515.9" stroke="#2a9a8c" stroke-width="1.6" opacity="0.75"/><path d="M460 533.9 L466 533.9" stroke="#2a9a8c" stroke-width="1.6" opacity="0.75"/><path d="M460 551.8 L466 551.8" stroke="#2a9a8c" stroke-width="1.6" opacity="0.75"/><path d="M460 569.8 L466 569.8" stroke="#2a9a8c" stroke-width="1.6" opacity="0.75"/><path d="M466 609.6 L466 699.8" stroke="#1f6091" stroke-width="1.6" opacity="0.75"/><path d="M460 609.7 L466 609.7" stroke="#1f6091" stroke-width="1.6" opacity="0.75"/><path d="M460 628.0 L466 628.0" stroke="#1f6091" stroke-width="1.6" opacity="0.75"/><path d="M460 645.9 L466 645.9" stroke="#1f6091" stroke-width="1.6" opacity="0.75"/><path d="M460 663.9 L466 663.9" stroke="#1f6091" stroke-width="1.6" opacity="0.75"/><path d="M460 681.8 L466 681.8" stroke="#1f6091" stroke-width="1.6" opacity="0.75"/><path d="M460 699.8 L466 699.8" stroke="#1f6091" stroke-width="1.6" opacity="0.75"/><path d="M466.0 559.0 L470.2 554.9 L474.5 551.9 L478.8 547.9 L483.0 544.6 L487.5 543.2 L492.0 541.4 L495.6 536.9 L499.2 531.0 L502.8 526.1 L506.4 523.0 L510.0 517.5 L514.0 514.4 L518.0 511.7 L522.0 510.6 L526.0 507.0 L529.5 503.9 L533.0 501.7 L536.5 498.0 L540.0 495.0 L544.0 491.3 L548.0 487.0 L554.5 492.0 L558.0 493.7 L561.5 497.1 L565.0 499.9 L568.5 501.6 L572.0 504.0 L576.0 507.0 L580.0 509.3 L584.0 510.6 L588.0 514.0 L592.0 517.0 L596.0 519.2 L600.0 521.1 L604.0 524.0 L607.5 525.5 L611.0 529.5 L614.5 531.1 L618.0 534.0 L621.5 536.0 L625.5 539.3 L629.5 541.4 L633.5 544.3 L637.5 546.0 L641.4 548.3 L645.2 551.6 L649.1 553.4 L653.0 556.0 L656.9 558.6 L660.8 560.2 L664.7 560.3 L668.6 562.1 L672.5 564.5 L676.7 565.7 L680.8 569.0 L685.0 569.8 L808.0 569.8 L812.0 567.8 L816.0 566.3 L820.0 563.8 L824.0 562.4 L828.0 560.5 L831.8 558.6 L835.6 556.8 L839.4 555.6 L843.2 553.9 L847.0 552.0 L850.6 551.3 L854.2 549.4 L857.8 548.4 L861.4 546.8 L865.0 544.6 L868.5 544.1 L872.0 542.1 L875.5 539.6 L879.0 539.6 L882.5 537.4 L886.0 538.4 L889.5 538.4 L893.0 537.9 L896.5 538.3 L900.0 538.0 L903.5 537.4 L907.1 538.6 L910.6 538.1 L914.2 537.5 L917.7 537.1 L921.2 538.6 L924.8 538.9 L928.3 537.1 L931.9 538.5 L935.4 537.7 L939.0 537.2 L942.5 537.5 L946.0 538.4 L949.6 538.6 L953.1 536.9 L956.7 538.1 L960.2 536.9 L963.8 538.2 L967.3 537.5 L970.8 538.6 L974.4 538.7 L977.9 537.8 L981.5 538.8 L985.0 537.4 L988.5 536.9 L992.1 537.9 L995.6 536.8 L999.2 537.1 L1002.7 537.5 L1006.2 537.9 L1009.8 537.0 L1013.3 536.8 L1016.9 538.4 L1020.4 537.3 L1024.0 538.6 L1027.5 538.4 L1031.0 537.4 L1034.6 537.5 L1038.1 537.6 L1041.7 537.9 L1045.2 537.8 L1048.8 537.7 L1052.3 537.8 L1055.8 538.4 L1059.4 537.5 L1062.9 537.4 L1066.5 538.0 L1070.0 537.5 L1073.9 535.6 L1077.7 534.4 L1081.6 533.4 L1088.0 523.8 L1091.6 522.0 L1095.2 518.3 L1098.7 515.6 L1102.3 512.7 L1106.5 507.5 L1110.8 504.1 L1115.0 500.0 L1118.8 496.8 L1122.7 492.2 L1126.5 490.0 L1130.3 486.4 L1134.3 484.3 L1138.3 481.6 L1142.3 483.1 L1146.3 486.4 L1150.3 489.6 L1154.2 492.3 L1158.2 495.7 L1162.2 498.3 L1166.2 500.8 L1170.1 504.3 L1174.0 507.2 L1178.0 509.5 L1182.0 511.1 L1186.0 513.8 L1190.0 517.7 L1194.0 519.9 L1198.0 523.8 L1202.0 525.4 L1206.0 528.7 L1210.0 531.8 L1214.0 535.0 L1218.0 537.4 L1222.0 540.5 L1226.0 543.8 L1230.0 545.8 L1234.0 548.3 L1238.0 551.2 L1242.0 553.4 L1245.5 554.4 L1249.0 556.0 L1252.5 558.2 L1256.0 558.1 L1259.5 560.5 L1263.0 561.9 L1266.5 563.6 L1270.0 564.0 L1273.5 565.1 L1277.0 567.0 L1281.3 568.5 L1285.7 568.3 L1290.0 569.8 L1321.0 569.8" fill="none" stroke="#2a9a8c" stroke-width="1.3" stroke-dasharray="12 8"/>
<path d="M466.0 533.0 L469.5 533.0 L473.0 533.2 L476.5 534.3 L480.0 535.0 L483.6 534.6 L487.1 534.7 L490.7 535.7 L494.3 537.0 L497.9 537.0 L501.4 537.2 L505.0 537.0 L508.6 536.5 L512.1 537.1 L515.7 536.6 L519.2 536.4 L522.8 536.3 L526.3 536.5 L529.9 537.9 L533.5 537.7 L537.0 537.7 L540.6 537.7 L544.1 536.5 L547.7 536.7 L551.2 537.4 L554.8 537.6 L558.4 537.9 L561.9 537.9 L565.5 536.3 L569.0 537.4 L572.6 537.5 L576.2 537.2 L579.7 536.6 L583.3 537.2 L586.8 536.4 L590.4 538.1 L593.9 538.0 L597.5 537.3 L601.1 536.9 L604.6 538.1 L608.2 537.4 L611.7 538.1 L615.3 538.0 L618.8 537.3 L622.4 537.1 L626.0 537.5 L629.5 537.2 L633.1 536.7 L636.6 537.0 L640.2 538.0 L643.8 536.5 L647.3 536.5 L650.9 537.6 L654.4 537.0 L658.0 537.5 L661.5 537.4 L665.1 537.1 L668.7 538.4 L672.2 536.8 L675.8 537.3 L679.3 536.9 L682.9 537.7 L686.4 537.0 L690.0 537.5 L693.7 536.4 L697.3 536.3 L701.0 535.0 L704.9 531.5 L708.9 528.8 L712.8 526.3 L716.7 522.3 L720.7 518.3 L724.7 515.0 L728.6 512.2 L732.6 509.5 L736.6 507.0 L740.6 503.7 L744.6 500.0 L748.6 497.5 L752.2 493.8 L755.8 490.1 L759.4 487.3 L763.0 484.0 L766.0 482.4 L770.3 484.4 L774.7 488.5 L779.0 491.0 L783.0 494.4 L787.0 497.2 L791.0 499.3 L795.0 501.5 L799.0 505.4 L803.0 506.5 L807.0 510.1 L811.0 513.5 L814.9 517.1 L818.9 519.3 L822.8 521.2 L826.7 524.0 L830.3 527.2 L833.9 528.9 L837.4 531.7 L841.0 533.4 L844.8 535.1 L848.6 536.9 L852.4 539.5 L856.2 541.0 L860.0 543.8 L864.0 546.1 L868.0 549.8 L872.0 551.1 L876.0 554.0 L879.8 554.4 L883.6 555.9 L887.4 557.5 L891.2 560.2 L895.0 561.0 L898.5 561.4 L902.0 562.0 L905.5 562.3 L909.0 564.8 L912.5 564.5 L916.3 565.3 L920.2 565.8 L924.0 566.5 L927.9 567.5 L931.7 569.3 L935.3 568.7 L938.8 569.7 L942.4 568.7 L945.9 568.5 L949.5 569.4 L953.1 568.9 L956.6 569.8 L960.2 568.7 L963.7 569.6 L967.3 569.8 L970.9 569.4 L974.4 569.8 L978.0 569.6 L981.5 569.1 L985.1 569.5 L988.6 568.7 L992.2 569.5 L995.8 569.2 L999.3 569.8 L1002.9 569.8 L1006.4 569.8 L1010.0 569.8 L1014.7 566.2 L1019.4 564.5 L1023.1 562.2 L1026.8 560.3 L1030.5 559.0 L1034.5 556.4 L1038.5 554.5 L1042.5 553.7 L1046.5 551.0 L1050.3 548.5 L1054.1 546.5 L1058.0 546.5 L1061.8 543.9 L1065.6 542.0 L1069.9 540.2 L1074.3 536.3 L1078.7 534.6 L1083.0 531.0 L1086.5 531.6 L1090.1 532.2 L1093.6 532.4 L1097.2 532.3 L1100.7 532.6 L1104.2 531.7 L1107.7 531.9 L1111.2 533.2 L1114.7 533.2 L1118.2 533.2 L1121.7 531.9 L1125.2 532.5 L1128.7 532.7 L1132.2 532.4 L1135.7 532.6 L1139.2 532.0 L1142.7 532.2 L1146.2 532.2 L1149.7 531.3 L1153.2 532.6 L1156.7 532.6 L1160.2 530.7 L1163.7 532.5 L1167.2 532.4 L1170.7 531.8 L1174.2 530.4 L1177.7 532.1 L1181.2 530.5 L1184.7 532.1 L1188.2 531.5 L1191.7 530.2 L1195.2 530.3 L1198.8 531.2 L1202.3 531.0 L1205.8 531.3 L1209.3 531.6 L1212.8 530.1 L1216.3 529.7 L1219.8 531.4 L1223.3 529.6 L1226.8 531.2 L1230.3 529.6 L1233.8 531.0 L1237.3 530.9 L1240.8 531.0 L1244.3 530.3 L1247.8 530.9 L1251.3 529.5 L1254.8 530.3 L1258.3 529.6 L1261.8 530.7 L1265.3 530.4 L1268.8 529.7 L1272.3 529.7 L1275.8 528.7 L1279.3 528.6 L1282.8 529.7 L1286.3 529.4 L1289.8 529.4 L1293.5 528.5 L1297.3 526.4 L1301.0 524.6 L1305.0 521.9 L1309.0 520.7 L1313.2 517.2 L1317.5 514.8 L1321.7 511.0" fill="none" stroke="#2a9a8c" stroke-width="1.3" stroke-dasharray="12 8"/>
<path d="M466.0 533.0 L469.9 533.3 L473.7 533.6 L477.6 533.7 L481.4 534.0 L485.3 533.4 L489.1 533.8 L493.0 532.6 L497.2 531.0 L501.5 532.0 L505.8 533.0 L510.0 531.5 L514.0 530.3 L518.0 529.4 L522.0 525.5 L526.0 525.0 L529.6 523.3 L533.2 521.0 L536.8 520.1 L540.4 518.6 L544.0 516.7 L548.2 513.3 L552.5 511.9 L556.8 510.1 L561.0 508.7 L565.2 507.3 L569.5 504.2 L573.8 499.9 L578.0 498.3 L583.0 500.0 L588.0 500.0 L591.5 499.5 L595.0 501.0 L599.0 500.7 L603.0 498.6 L607.0 497.6 L611.0 498.3 L614.8 498.9 L618.6 496.6 L622.4 496.1 L626.2 497.8 L630.0 496.0 L633.6 497.2 L637.2 495.7 L640.8 497.7 L644.4 496.7 L648.0 496.7 L652.0 496.8 L656.0 495.1 L660.0 496.8 L664.0 495.7 L668.0 494.8 L671.6 496.1 L675.2 495.8 L678.9 494.1 L682.5 494.3 L686.1 493.7 L689.8 493.6 L693.4 493.3 L697.0 494.5 L701.0 495.2 L705.0 497.0 L708.5 494.8 L712.0 492.0 L715.6 490.8 L719.1 492.9 L722.7 492.2 L726.3 492.3 L729.9 494.0 L733.4 493.2 L737.0 493.5 L739.5 569.8 L808.0 569.8 L811.5 568.3 L815.0 567.8 L818.5 567.5 L822.0 566.0 L826.0 564.2 L830.0 566.2 L834.0 562.9 L838.0 563.7 L842.2 563.2 L846.5 562.3 L850.8 558.8 L855.0 559.0 L858.6 558.2 L862.2 555.4 L865.8 554.4 L869.4 551.2 L873.0 551.0 L876.5 548.7 L880.0 548.1 L883.5 549.3 L887.0 547.0 L890.8 545.6 L894.7 546.6 L898.5 545.4 L902.3 545.5 L906.1 544.5 L909.9 541.8 L913.6 540.8 L917.4 540.2 L921.2 539.8 L925.0 538.0 L928.6 536.3 L932.2 537.5 L935.8 537.0 L939.4 536.6 L943.0 535.0 L946.8 532.3 L950.6 533.4 L954.4 529.5 L958.2 528.8 L962.0 527.8 L965.6 528.1 L969.2 529.0 L972.8 527.4 L976.4 529.0 L980.0 527.8 L984.0 527.6 L988.0 526.6 L992.0 526.3 L996.0 525.6 L1000.0 526.2 L1004.0 525.0 L1008.0 525.2 L1012.0 526.7 L1016.0 526.2 L1019.6 527.8 L1023.2 525.6 L1026.8 525.4 L1030.4 528.2 L1034.0 527.0 L1038.2 526.5 L1042.5 525.5 L1046.8 524.5 L1051.0 524.6 L1054.8 524.4 L1058.6 524.6 L1062.4 523.1 L1066.2 522.5 L1070.0 522.3 L1073.8 521.2 L1077.6 523.8 L1081.4 521.4 L1085.2 522.9 L1089.0 524.0 L1092.8 522.2 L1096.6 524.0 L1100.4 524.8 L1104.2 524.0 L1108.0 523.8 L1112.3 524.1 L1116.5 521.7 L1120.8 522.3 L1124.8 520.1 L1128.8 517.3 L1132.8 517.3 L1136.7 513.7 L1140.7 512.2 L1144.7 510.3 L1148.3 510.7 L1151.8 509.3 L1155.4 508.6 L1159.0 506.3 L1163.0 503.6 L1167.0 501.1 L1171.0 499.2 L1175.0 496.0 L1179.0 493.9 L1183.0 491.4 L1187.0 489.7 L1191.0 488.0 L1194.5 487.2 L1198.0 488.0 L1201.5 489.8 L1205.0 489.9 L1208.5 488.8 L1212.2 489.1 L1215.8 488.6 L1219.5 488.1 L1223.1 487.3 L1226.8 487.8 L1230.4 489.1 L1234.0 489.3 L1237.7 487.8 L1241.3 488.9 L1245.0 488.0 L1248.5 488.4 L1252.0 487.9 L1255.5 487.5 L1259.0 487.4 L1262.5 486.0 L1266.0 486.7 L1269.5 485.1 L1273.0 485.4 L1276.5 485.9 L1280.0 484.8 L1284.0 485.5 L1288.0 484.6 L1292.0 486.6 L1296.0 485.6 L1299.5 486.0 L1303.1 485.8 L1306.6 484.2 L1310.2 485.7 L1313.7 485.6 L1317.0 569.8 L1321.0 569.8" fill="none" stroke="#f4511e" stroke-width="1.3" stroke-dasharray="12 8"/>
<path d="M466.0 562.5 L470.5 562.1 L475.0 560.0 L479.2 560.0 L483.5 558.2 L487.8 556.7 L492.0 556.5 L495.6 553.8 L499.2 554.4 L502.8 552.5 L506.4 552.0 L510.0 550.0 L513.6 549.2 L517.2 549.9 L520.8 548.0 L524.4 549.1 L528.0 547.8 L532.2 546.6 L536.5 544.0 L540.8 542.5 L545.0 540.6 L549.2 540.1 L553.5 537.7 L557.8 537.8 L562.0 536.6 L565.6 537.1 L569.2 535.3 L572.8 536.5 L576.4 535.8 L580.0 535.0 L584.0 536.1 L588.0 534.9 L592.0 534.3 L596.0 536.5 L600.0 535.8 L604.0 536.5 L608.0 535.3 L612.0 534.2 L616.0 534.3 L620.0 535.0 L623.6 535.1 L627.2 533.8 L630.8 535.3 L634.4 534.0 L638.0 533.4 L642.0 532.6 L646.0 533.8 L650.0 533.0 L654.0 534.6 L658.0 533.4 L662.0 534.4 L666.0 533.1 L670.0 533.3 L674.0 533.3 L678.0 532.6 L681.8 533.3 L685.5 533.6 L689.2 530.8 L693.0 532.0 L696.9 531.4 L700.9 531.8 L704.8 530.7 L708.7 531.0 L713.0 530.5 L717.4 528.4 L721.7 529.8 L726.0 528.0 L731.0 526.0 L736.0 523.8 L740.0 520.3 L744.0 519.0 L747.8 518.2 L751.6 516.0 L755.4 514.4 L759.2 513.9 L763.0 512.7 L767.0 509.9 L771.0 508.3 L775.0 508.3 L779.0 505.5 L783.4 505.3 L787.7 502.5 L792.0 503.9 L796.4 502.3 L800.2 500.3 L804.1 500.5 L807.9 501.5 L811.8 500.0 L815.6 499.0 L820.0 498.9 L824.3 499.5 L828.6 500.0 L833.0 500.7 L836.8 499.0 L840.6 500.8 L844.4 497.5 L848.2 497.9 L852.0 497.5 L855.9 497.7 L859.8 496.2 L863.6 497.3 L867.5 494.8 L871.4 495.0 L874.9 496.7 L878.4 496.8 L882.0 496.5 L885.5 497.5 L889.0 496.7 L892.7 496.6 L896.3 497.6 L900.0 496.7 L903.6 497.2 L907.2 496.1 L910.8 495.6 L914.4 495.9 L918.0 495.0 L921.5 494.2 L925.0 494.0 L929.0 493.2 L933.0 495.4 L937.0 495.0 L939.0 569.8 L1010.0 569.8 L1013.8 568.6 L1017.6 568.6 L1021.4 568.9 L1025.2 566.6 L1029.0 567.0 L1032.5 564.5 L1036.0 563.7 L1039.5 563.8 L1043.0 562.1 L1046.5 561.3 L1050.5 559.4 L1054.5 558.8 L1058.5 558.9 L1062.5 556.5 L1066.0 555.3 L1069.5 555.2 L1073.0 556.1 L1076.5 554.8 L1080.0 554.0 L1084.1 552.4 L1088.3 552.1 L1092.4 551.2 L1096.6 549.3 L1100.7 549.4 L1104.3 547.9 L1107.8 546.5 L1111.4 546.7 L1115.0 544.6 L1119.0 543.6 L1123.0 544.0 L1127.0 543.0 L1131.8 542.7 L1136.7 539.8 L1141.0 540.0 L1145.3 537.5 L1149.7 537.1 L1154.0 535.8 L1157.9 535.6 L1161.8 536.2 L1165.6 536.7 L1169.5 537.9 L1173.4 537.4 L1177.4 538.0 L1181.3 535.6 L1185.3 534.2 L1189.3 535.0 L1193.4 534.9 L1197.6 533.8 L1201.7 533.7 L1205.9 535.8 L1210.0 535.0 L1213.7 533.8 L1217.4 535.5 L1221.0 534.4 L1224.7 535.9 L1228.4 535.6 L1232.1 533.3 L1235.8 533.6 L1239.4 535.6 L1243.1 534.6 L1246.8 534.2 L1250.3 534.0 L1253.8 535.0 L1257.3 535.1 L1260.8 534.2 L1264.3 534.1 L1267.8 533.1 L1271.3 533.8 L1274.8 533.2 L1278.3 534.6 L1281.8 534.2 L1285.6 534.0 L1289.5 532.2 L1293.3 533.1 L1297.2 531.2 L1301.0 531.8 L1304.8 530.1 L1308.6 530.9 L1312.4 529.8 L1316.2 530.4 L1320.0 528.6" fill="none" stroke="#f4511e" stroke-width="1.3" stroke-dasharray="12 8"/>
<path d="M466.0 551.5 L469.5 550.0 L473.0 549.0 L477.0 550.7 L481.0 553.5 L487.0 555.0 L491.0 555.7 L495.0 556.0 L499.0 557.3 L503.0 560.0 L509.0 560.5 L513.0 569.8 L580.0 569.8 L585.0 568.0 L590.0 566.0 L593.8 564.4 L597.5 562.5 L601.2 561.9 L605.0 560.5 L608.8 558.0 L612.5 556.9 L616.2 554.6 L620.0 553.5 L623.8 551.2 L627.5 550.1 L631.2 549.1 L635.0 547.0 L638.5 542.9 L642.0 540.0 L647.0 536.6 L652.0 534.0 L656.3 533.9 L660.7 534.0 L665.0 533.0 L668.5 533.1 L672.1 532.9 L675.6 533.8 L679.1 532.4 L682.6 533.7 L686.2 532.8 L689.7 532.6 L693.2 532.5 L696.8 532.9 L700.3 533.7 L703.8 532.7 L707.3 533.4 L710.9 533.5 L714.4 533.1 L717.9 533.4 L721.5 532.6 L725.0 532.6 L728.5 532.9 L732.0 533.6 L735.6 533.3 L739.1 533.1 L742.6 533.6 L746.2 533.4 L749.7 533.1 L753.2 533.9 L756.7 533.8 L760.3 533.1 L763.8 533.6 L767.3 533.6 L770.8 534.2 L774.4 534.0 L777.9 533.3 L781.4 534.4 L785.0 533.0 L788.5 533.5 L792.0 534.1 L795.5 533.1 L799.1 533.7 L802.6 533.0 L806.1 534.0 L809.7 534.2 L813.2 533.9 L816.7 534.4 L820.2 533.5 L823.8 534.2 L827.3 534.0 L830.8 534.0 L834.4 533.8 L837.9 534.5 L841.4 534.7 L844.9 533.9 L848.5 534.2 L852.0 534.0 L855.8 529.9 L859.6 527.5 L863.4 523.8 L867.4 521.5 L871.4 519.4 L875.4 516.6 L879.4 513.5 L883.2 509.8 L887.0 506.6 L890.9 503.7 L894.7 499.3 L898.5 496.7 L905.0 492.0 L908.5 489.9 L912.0 488.0 L915.8 485.0 L919.6 483.0 L925.0 486.0 L930.0 488.6 L935.0 492.4 L939.0 494.4 L943.0 498.3 L947.0 500.0 L951.0 502.9 L955.0 506.0 L958.8 508.3 L962.5 511.6 L966.2 512.8 L970.0 516.0 L973.8 518.7 L977.5 521.6 L981.2 524.9 L985.0 527.0 L989.0 530.8 L993.0 534.2 L997.0 537.0 L1000.5 538.9 L1004.0 541.4 L1007.5 543.5 L1011.0 546.6 L1014.5 549.0 L1018.0 550.5 L1022.0 552.1 L1026.0 554.4 L1030.0 556.7 L1034.0 558.9 L1038.0 561.5 L1041.9 562.1 L1045.7 562.9 L1049.6 563.0 L1053.4 563.3 L1057.3 564.6 L1061.1 565.1 L1065.0 566.0 L1071.0 569.8 L1159.0 569.8 L1163.3 567.6 L1167.7 566.0 L1172.0 563.0 L1175.7 561.0 L1179.3 558.5 L1183.0 556.4 L1186.7 554.2 L1190.3 551.0 L1194.0 549.4 L1197.7 548.0 L1201.3 545.7 L1205.0 543.8 L1208.6 541.6 L1212.3 538.9 L1215.9 536.9 L1219.6 535.0 L1223.4 532.9 L1227.3 532.3 L1231.1 530.0 L1235.0 528.5 L1238.8 527.8 L1243.1 527.9 L1247.4 528.4 L1251.7 529.2 L1256.0 530.0 L1259.7 529.2 L1263.3 529.0 L1267.0 529.2 L1270.6 529.1 L1274.2 529.4 L1277.9 528.8 L1281.5 530.1 L1285.2 529.6 L1288.8 528.7 L1292.5 528.8 L1296.2 528.9 L1299.8 528.8 L1303.5 528.4 L1307.1 529.5 L1310.8 529.6 L1314.4 528.7 L1318.0 528.7 L1321.7 528.6" fill="none" stroke="#2a9a8c" stroke-width="1.3"/>
<path d="M466.0 497.0 L470.0 495.1 L474.0 494.5 L478.0 496.4 L482.0 496.0 L488.0 493.0 L493.0 495.5 L497.5 492.7 L502.0 491.7 L505.8 493.6 L509.5 494.5 L513.0 569.8 L580.5 569.8 L585.2 567.4 L590.0 567.0 L593.8 565.3 L597.5 565.9 L601.2 562.9 L605.0 562.5 L610.0 562.8 L615.0 562.5 L619.0 559.7 L623.0 557.0 L626.8 556.3 L630.6 555.8 L634.4 554.5 L638.2 555.4 L642.0 554.0 L645.8 551.6 L649.7 550.5 L653.5 548.6 L657.3 547.8 L661.2 546.7 L665.0 545.5 L668.8 546.5 L672.5 545.2 L676.2 544.6 L680.0 545.5 L684.0 544.1 L688.0 545.1 L692.0 542.1 L696.0 542.6 L700.0 541.5 L703.9 540.5 L707.7 540.5 L711.6 539.0 L715.4 539.1 L719.3 537.9 L723.1 537.6 L727.0 536.5 L731.0 533.0 L735.5 535.6 L740.0 536.3 L744.0 536.0 L748.0 534.5 L752.0 533.9 L756.0 535.5 L760.0 534.0 L763.8 534.0 L767.5 533.3 L771.2 535.1 L775.0 534.2 L778.8 534.5 L782.5 534.9 L786.2 533.5 L790.0 534.0 L793.8 533.5 L797.5 534.7 L801.2 532.7 L805.0 534.1 L808.8 532.4 L812.5 533.7 L816.2 533.6 L820.0 533.0 L823.8 533.9 L827.5 533.4 L831.2 532.4 L835.0 531.5 L838.8 531.2 L842.5 531.9 L846.2 531.7 L850.0 531.5 L854.0 530.8 L858.0 533.2 L862.0 532.6 L866.0 533.0 L872.0 527.0 L876.0 526.2 L880.0 524.5 L885.0 521.1 L890.0 519.0 L895.0 515.4 L900.0 513.0 L904.0 510.5 L908.0 510.0 L912.0 509.0 L916.0 506.4 L920.0 505.0 L925.0 502.3 L930.0 500.0 L935.0 496.7 L940.0 494.0 L943.5 496.2 L947.0 496.7 L950.8 496.8 L954.5 494.3 L958.2 494.1 L962.0 493.5 L966.0 493.9 L970.0 496.0 L975.0 494.6 L980.0 492.4 L983.6 493.4 L987.1 491.4 L990.7 492.7 L994.3 491.4 L997.9 490.6 L1001.4 492.3 L1005.0 491.5 L1010.0 494.0 L1014.5 491.6 L1019.0 490.0 L1024.0 493.0 L1028.0 491.4 L1032.0 491.2 L1036.0 489.8 L1040.0 489.4 L1044.0 488.8 L1047.5 488.9 L1051.0 489.0 L1054.5 489.6 L1058.0 489.1 L1061.5 488.8 L1065.0 490.0 L1069.0 488.1 L1073.0 487.3 L1077.0 487.4 L1081.0 486.4 L1087.0 486.5 L1090.0 569.8 L1160.6 569.8 L1164.3 568.0 L1168.1 567.5 L1171.8 565.3 L1175.8 564.1 L1179.8 563.4 L1183.7 562.9 L1187.7 560.5 L1191.7 558.8 L1195.7 558.1 L1199.7 557.8 L1203.7 558.0 L1207.7 556.4 L1211.7 555.5 L1215.6 554.5 L1219.6 552.6 L1223.8 551.0 L1227.9 551.2 L1232.1 547.6 L1236.2 548.3 L1240.4 546.2 L1244.2 544.7 L1248.0 545.5 L1251.9 542.7 L1255.7 544.1 L1259.5 542.2 L1263.6 541.9 L1267.7 541.5 L1271.8 539.5 L1275.9 537.6 L1280.0 537.4 L1284.1 536.1 L1288.2 532.6 L1291.9 531.9 L1295.7 530.5 L1299.4 531.0 L1303.6 530.2 L1307.8 528.9 L1312.0 527.8 L1316.8 528.5 L1321.7 529.4" fill="none" stroke="#f4511e" stroke-width="1.3"/>
<path d="M466.0 689.0 L470.2 684.9 L474.5 682.2 L478.8 678.6 L483.0 674.6 L487.5 673.7 L492.0 671.4 L495.6 666.0 L499.2 661.3 L502.8 656.4 L506.4 651.7 L510.0 647.5 L514.0 645.3 L518.0 641.5 L522.0 639.7 L526.0 637.0 L529.5 633.4 L533.0 630.6 L536.5 627.9 L540.0 625.0 L544.0 621.7 L548.0 617.0 L554.5 622.0 L558.0 624.6 L561.5 625.8 L565.0 628.8 L568.5 630.9 L572.0 634.0 L576.0 637.2 L580.0 639.6 L584.0 642.1 L588.0 644.0 L592.0 647.2 L596.0 649.5 L600.0 652.4 L604.0 654.0 L607.5 657.0 L611.0 658.3 L614.5 661.9 L618.0 663.6 L621.5 666.0 L625.5 669.0 L629.5 671.1 L633.5 673.4 L637.5 676.0 L641.4 678.2 L645.2 680.9 L649.1 683.1 L653.0 686.0 L656.9 686.9 L660.8 690.0 L664.7 691.7 L668.6 693.8 L672.5 694.5 L676.7 696.6 L680.8 698.1 L685.0 699.8 L808.0 699.8 L812.0 698.4 L816.0 695.3 L820.0 694.6 L824.0 692.2 L828.0 690.5 L831.8 688.2 L835.6 686.5 L839.4 685.4 L843.2 683.2 L847.0 682.0 L850.6 680.4 L854.2 679.3 L857.8 677.4 L861.4 675.3 L865.0 674.6 L868.5 673.1 L872.0 671.2 L875.5 669.8 L879.0 668.2 L882.5 667.4 L886.0 667.3 L889.5 666.8 L893.0 668.1 L896.5 668.8 L900.0 668.0 L903.5 667.8 L907.1 668.4 L910.6 668.8 L914.2 667.0 L917.7 667.2 L921.2 668.5 L924.8 668.6 L928.3 668.2 L931.9 667.2 L935.4 667.7 L939.0 668.6 L942.5 668.6 L946.0 668.5 L949.6 667.3 L953.1 668.6 L956.7 667.6 L960.2 668.3 L963.8 667.1 L967.3 668.7 L970.8 668.0 L974.4 668.2 L977.9 667.2 L981.5 668.0 L985.0 667.9 L988.5 667.9 L992.1 667.4 L995.6 668.2 L999.2 667.4 L1002.7 667.3 L1006.2 667.0 L1009.8 668.0 L1013.3 666.9 L1016.9 667.1 L1020.4 666.8 L1024.0 667.9 L1027.5 667.7 L1031.0 667.7 L1034.6 666.7 L1038.1 667.5 L1041.7 667.3 L1045.2 666.8 L1048.8 666.6 L1052.3 668.5 L1055.8 666.8 L1059.4 667.1 L1062.9 667.1 L1066.5 667.7 L1070.0 667.5 L1073.9 665.3 L1077.7 664.7 L1081.6 663.4 L1088.0 653.8 L1091.6 650.8 L1095.2 648.9 L1098.7 644.5 L1102.3 642.7 L1106.5 638.1 L1110.8 634.2 L1115.0 630.0 L1118.8 627.5 L1122.7 623.2 L1126.5 619.7 L1130.3 616.4 L1134.3 614.3 L1138.3 611.6 L1142.3 613.6 L1146.3 616.4 L1150.3 618.4 L1154.2 622.4 L1158.2 626.1 L1162.2 628.3 L1166.2 631.6 L1170.1 633.4 L1174.0 637.1 L1178.0 639.5 L1182.0 642.8 L1186.0 644.2 L1190.0 647.5 L1194.0 649.9 L1198.0 652.6 L1202.0 655.3 L1206.0 658.4 L1210.0 661.8 L1214.0 664.2 L1218.0 667.5 L1222.0 669.9 L1226.0 673.8 L1230.0 676.0 L1234.0 677.8 L1238.0 681.5 L1242.0 683.4 L1245.5 685.0 L1249.0 685.2 L1252.5 688.2 L1256.0 688.5 L1259.5 690.5 L1263.0 691.8 L1266.5 693.2 L1270.0 694.1 L1273.5 695.3 L1277.0 697.0 L1281.3 697.8 L1285.7 698.1 L1290.0 699.8 L1321.0 699.8" fill="none" stroke="#2e8a12" stroke-width="1.3" stroke-dasharray="12 8"/>
<path d="M466.0 663.0 L469.5 662.7 L473.0 664.4 L476.5 664.8 L480.0 665.0 L483.6 666.2 L487.1 665.1 L490.7 665.4 L494.3 666.6 L497.9 666.7 L501.4 666.3 L505.0 667.0 L508.6 667.4 L512.1 666.8 L515.7 667.6 L519.2 666.3 L522.8 666.5 L526.3 667.9 L529.9 666.8 L533.5 666.6 L537.0 667.7 L540.6 667.4 L544.1 666.4 L547.7 667.2 L551.2 667.5 L554.8 666.5 L558.4 667.4 L561.9 666.4 L565.5 666.8 L569.0 666.3 L572.6 666.6 L576.2 668.1 L579.7 667.0 L583.3 668.2 L586.8 667.1 L590.4 667.4 L593.9 668.0 L597.5 667.6 L601.1 666.5 L604.6 667.4 L608.2 667.5 L611.7 666.7 L615.3 666.5 L618.8 668.1 L622.4 667.3 L626.0 666.7 L629.5 667.2 L633.1 666.8 L636.6 668.0 L640.2 667.4 L643.8 666.6 L647.3 668.0 L650.9 666.6 L654.4 667.0 L658.0 666.5 L661.5 667.9 L665.1 666.7 L668.7 667.5 L672.2 666.6 L675.8 667.4 L679.3 667.8 L682.9 667.6 L686.4 667.4 L690.0 667.5 L693.7 666.6 L697.3 665.7 L701.0 665.0 L704.9 662.0 L708.9 657.8 L712.8 655.4 L716.7 652.3 L720.7 648.6 L724.7 646.6 L728.6 643.6 L732.6 639.5 L736.6 635.6 L740.6 632.8 L744.6 630.9 L748.6 627.5 L752.2 624.3 L755.8 619.8 L759.4 617.8 L763.0 614.0 L766.0 612.4 L770.3 616.2 L774.7 618.0 L779.0 621.0 L783.0 623.3 L787.0 626.4 L791.0 629.8 L795.0 631.5 L799.0 634.0 L803.0 637.1 L807.0 639.9 L811.0 643.5 L814.9 646.4 L818.9 648.7 L822.8 650.9 L826.7 654.0 L830.3 656.1 L833.9 657.8 L837.4 660.7 L841.0 663.4 L844.8 666.4 L848.6 667.7 L852.4 669.2 L856.2 672.6 L860.0 673.8 L864.0 676.1 L868.0 678.4 L872.0 680.5 L876.0 684.0 L879.8 684.7 L883.6 686.2 L887.4 687.7 L891.2 690.3 L895.0 691.0 L898.5 691.2 L902.0 691.9 L905.5 693.3 L909.0 694.6 L912.5 694.5 L916.3 695.0 L920.2 696.9 L924.0 697.1 L927.9 698.5 L931.7 699.3 L935.3 699.5 L938.8 699.8 L942.4 699.8 L945.9 699.4 L949.5 699.8 L953.1 699.2 L956.6 699.2 L960.2 699.8 L963.7 699.6 L967.3 699.8 L970.9 699.2 L974.4 699.8 L978.0 699.8 L981.5 699.1 L985.1 699.8 L988.6 699.6 L992.2 699.4 L995.8 699.2 L999.3 698.9 L1002.9 699.2 L1006.4 699.8 L1010.0 699.8 L1014.7 696.4 L1019.4 694.5 L1023.1 692.2 L1026.8 690.7 L1030.5 689.0 L1034.5 687.1 L1038.5 684.8 L1042.5 683.6 L1046.5 681.0 L1050.3 678.7 L1054.1 677.1 L1058.0 675.5 L1061.8 673.1 L1065.6 672.0 L1069.9 668.7 L1074.3 665.8 L1078.7 664.2 L1083.0 661.0 L1086.5 660.6 L1090.1 662.0 L1093.6 661.4 L1097.2 662.6 L1100.7 662.6 L1104.2 662.9 L1107.7 662.2 L1111.2 663.3 L1114.7 662.7 L1118.2 662.4 L1121.7 661.3 L1125.2 662.0 L1128.7 661.7 L1132.2 662.0 L1135.7 662.9 L1139.2 662.7 L1142.7 661.0 L1146.2 662.2 L1149.7 662.6 L1153.2 661.8 L1156.7 660.8 L1160.2 662.3 L1163.7 661.4 L1167.2 662.4 L1170.7 662.2 L1174.2 662.0 L1177.7 662.2 L1181.2 660.4 L1184.7 661.8 L1188.2 660.7 L1191.7 660.3 L1195.2 660.8 L1198.8 661.1 L1202.3 659.9 L1205.8 660.7 L1209.3 661.3 L1212.8 660.7 L1216.3 660.7 L1219.8 660.2 L1223.3 661.5 L1226.8 660.0 L1230.3 660.8 L1233.8 660.6 L1237.3 659.3 L1240.8 661.2 L1244.3 659.6 L1247.8 661.1 L1251.3 660.9 L1254.8 660.8 L1258.3 660.6 L1261.8 659.7 L1265.3 659.7 L1268.8 659.4 L1272.3 660.6 L1275.8 658.7 L1279.3 658.9 L1282.8 660.4 L1286.3 660.1 L1289.8 659.4 L1293.5 658.2 L1297.3 657.1 L1301.0 654.6 L1305.0 652.7 L1309.0 650.7 L1313.2 648.1 L1317.5 644.1 L1321.7 641.0" fill="none" stroke="#2e8a12" stroke-width="1.3" stroke-dasharray="12 8"/>
<path d="M466.0 663.0 L469.9 664.2 L473.7 661.5 L477.6 663.5 L481.4 661.8 L485.3 664.1 L489.1 661.3 L493.0 662.6 L497.2 663.4 L501.5 662.6 L505.8 662.8 L510.0 661.5 L514.0 661.3 L518.0 657.5 L522.0 656.2 L526.0 655.0 L529.6 653.9 L533.2 651.1 L536.8 649.4 L540.4 647.6 L544.0 646.7 L548.2 645.7 L552.5 643.7 L556.8 641.5 L561.0 638.7 L565.2 635.3 L569.5 634.7 L573.8 630.9 L578.0 628.3 L583.0 628.4 L588.0 630.0 L591.5 630.4 L595.0 631.0 L599.0 630.1 L603.0 628.5 L607.0 629.2 L611.0 628.3 L614.8 627.4 L618.6 627.6 L622.4 628.1 L626.2 626.9 L630.0 626.0 L633.6 625.9 L637.2 627.3 L640.8 627.8 L644.4 626.5 L648.0 626.7 L652.0 627.6 L656.0 624.6 L660.0 624.6 L664.0 624.3 L668.0 624.8 L671.6 626.0 L675.2 625.3 L678.9 625.3 L682.5 624.1 L686.1 624.6 L689.8 625.7 L693.4 623.4 L697.0 624.5 L701.0 624.7 L705.0 627.0 L708.5 623.2 L712.0 622.0 L715.6 622.1 L719.1 623.4 L722.7 622.8 L726.3 622.6 L729.9 623.1 L733.4 622.4 L737.0 623.5 L739.5 699.8 L808.0 699.8 L811.5 699.8 L815.0 697.5 L818.5 696.2 L822.0 696.0 L826.0 694.9 L830.0 695.8 L834.0 693.8 L838.0 693.7 L842.2 693.7 L846.5 690.9 L850.8 690.0 L855.0 689.0 L858.6 686.2 L862.2 686.9 L865.8 685.0 L869.4 682.5 L873.0 681.0 L876.5 678.9 L880.0 679.0 L883.5 677.7 L887.0 677.0 L890.8 677.4 L894.7 677.1 L898.5 675.4 L902.3 675.0 L906.1 672.7 L909.9 670.9 L913.6 672.3 L917.4 671.4 L921.2 668.1 L925.0 668.0 L928.6 667.4 L932.2 666.7 L935.8 667.5 L939.4 664.3 L943.0 665.0 L946.8 662.3 L950.6 663.1 L954.4 660.9 L958.2 659.1 L962.0 657.8 L965.6 658.6 L969.2 658.1 L972.8 658.3 L976.4 657.1 L980.0 657.8 L984.0 656.3 L988.0 655.8 L992.0 656.4 L996.0 656.9 L1000.0 656.2 L1004.0 655.9 L1008.0 655.8 L1012.0 656.5 L1016.0 656.2 L1019.6 656.9 L1023.2 656.8 L1026.8 656.2 L1030.4 657.7 L1034.0 657.0 L1038.2 657.2 L1042.5 656.9 L1046.8 656.3 L1051.0 654.6 L1054.8 652.8 L1058.6 654.2 L1062.4 652.8 L1066.2 652.4 L1070.0 652.3 L1073.8 652.5 L1077.6 651.6 L1081.4 652.0 L1085.2 654.3 L1089.0 652.6 L1092.8 654.4 L1096.6 653.9 L1100.4 653.0 L1104.2 653.1 L1108.0 653.8 L1112.3 653.6 L1116.5 653.4 L1120.8 652.3 L1124.8 649.9 L1128.8 647.1 L1132.8 645.4 L1136.7 645.3 L1140.7 642.9 L1144.7 640.3 L1148.3 638.2 L1151.8 639.2 L1155.4 637.5 L1159.0 636.3 L1163.0 633.3 L1167.0 632.3 L1171.0 627.5 L1175.0 626.0 L1179.0 622.9 L1183.0 621.6 L1187.0 620.7 L1191.0 618.0 L1194.5 618.3 L1198.0 618.3 L1201.5 619.6 L1205.0 618.3 L1208.5 618.8 L1212.2 619.5 L1215.8 617.3 L1219.5 619.4 L1223.1 617.5 L1226.8 618.8 L1230.4 619.3 L1234.0 618.7 L1237.7 618.4 L1241.3 618.2 L1245.0 618.0 L1248.5 618.4 L1252.0 617.0 L1255.5 616.3 L1259.0 616.9 L1262.5 616.5 L1266.0 615.0 L1269.5 615.8 L1273.0 615.3 L1276.5 614.2 L1280.0 614.8 L1284.0 615.6 L1288.0 616.0 L1292.0 614.9 L1296.0 615.6 L1299.5 616.6 L1303.1 617.0 L1306.6 616.1 L1310.2 615.3 L1313.7 615.6 L1317.0 699.8 L1321.0 699.8" fill="none" stroke="#1f6091" stroke-width="1.3" stroke-dasharray="12 8"/>
<path d="M466.0 692.5 L470.5 690.9 L475.0 690.0 L479.2 689.1 L483.5 688.0 L487.8 687.2 L492.0 686.5 L495.6 684.9 L499.2 684.3 L502.8 681.9 L506.4 681.7 L510.0 680.0 L513.6 678.2 L517.2 678.6 L520.8 678.2 L524.4 677.2 L528.0 677.8 L532.2 676.7 L536.5 673.7 L540.8 673.2 L545.0 670.6 L549.2 670.9 L553.5 667.9 L557.8 668.7 L562.0 666.6 L565.6 667.1 L569.2 666.4 L572.8 664.3 L576.4 665.2 L580.0 665.0 L584.0 665.5 L588.0 664.7 L592.0 664.7 L596.0 665.1 L600.0 665.8 L604.0 665.0 L608.0 666.3 L612.0 664.9 L616.0 664.9 L620.0 665.0 L623.6 665.1 L627.2 665.6 L630.8 663.5 L634.4 662.4 L638.0 663.4 L642.0 664.7 L646.0 664.3 L650.0 664.2 L654.0 663.5 L658.0 663.4 L662.0 662.5 L666.0 662.1 L670.0 662.4 L674.0 662.7 L678.0 662.6 L681.8 661.2 L685.5 662.9 L689.2 662.8 L693.0 662.0 L696.9 660.4 L700.9 662.5 L704.8 661.2 L708.7 661.0 L713.0 661.4 L717.4 659.4 L721.7 659.6 L726.0 658.0 L731.0 655.8 L736.0 653.8 L740.0 651.7 L744.0 649.0 L747.8 647.7 L751.6 645.1 L755.4 644.2 L759.2 643.2 L763.0 642.7 L767.0 640.6 L771.0 638.7 L775.0 637.4 L779.0 635.5 L783.4 635.1 L787.7 633.6 L792.0 632.6 L796.4 632.3 L800.2 631.7 L804.1 632.2 L807.9 631.1 L811.8 630.1 L815.6 629.0 L820.0 630.3 L824.3 629.1 L828.6 629.2 L833.0 630.7 L836.8 628.9 L840.6 628.4 L844.4 627.4 L848.2 628.5 L852.0 627.5 L855.9 628.2 L859.8 625.4 L863.6 626.5 L867.5 626.7 L871.4 625.0 L874.9 626.1 L878.4 624.7 L882.0 626.4 L885.5 625.7 L889.0 626.7 L892.7 625.8 L896.3 625.3 L900.0 626.7 L903.6 626.4 L907.2 627.2 L910.8 624.6 L914.4 624.4 L918.0 625.0 L921.5 624.2 L925.0 624.0 L929.0 623.0 L933.0 624.6 L937.0 625.0 L939.0 699.8 L1010.0 699.8 L1013.8 699.8 L1017.6 698.6 L1021.4 696.8 L1025.2 696.2 L1029.0 697.0 L1032.5 695.0 L1036.0 695.2 L1039.5 694.8 L1043.0 692.4 L1046.5 691.3 L1050.5 689.0 L1054.5 688.1 L1058.5 687.5 L1062.5 686.5 L1066.0 684.9 L1069.5 684.4 L1073.0 684.8 L1076.5 685.5 L1080.0 684.0 L1084.1 682.3 L1088.3 683.2 L1092.4 682.3 L1096.6 680.1 L1100.7 679.4 L1104.3 677.4 L1107.8 676.1 L1111.4 676.3 L1115.0 674.6 L1119.0 675.0 L1123.0 674.5 L1127.0 673.0 L1131.8 670.6 L1136.7 669.8 L1141.0 668.6 L1145.3 666.5 L1149.7 666.3 L1154.0 665.8 L1157.9 665.5 L1161.8 665.4 L1165.6 665.6 L1169.5 668.5 L1173.4 667.4 L1177.4 666.3 L1181.3 666.2 L1185.3 665.7 L1189.3 665.0 L1193.4 664.9 L1197.6 665.3 L1201.7 665.0 L1205.9 665.0 L1210.0 665.0 L1213.7 663.7 L1217.4 665.2 L1221.0 665.2 L1224.7 665.3 L1228.4 664.1 L1232.1 664.4 L1235.8 665.3 L1239.4 665.0 L1243.1 663.0 L1246.8 664.2 L1250.3 663.7 L1253.8 663.3 L1257.3 664.8 L1260.8 663.9 L1264.3 663.9 L1267.8 663.4 L1271.3 664.1 L1274.8 664.8 L1278.3 664.6 L1281.8 664.2 L1285.6 662.9 L1289.5 662.9 L1293.3 663.1 L1297.2 661.0 L1301.0 661.8 L1304.8 662.3 L1308.6 659.2 L1312.4 660.2 L1316.2 658.3 L1320.0 658.6" fill="none" stroke="#1f6091" stroke-width="1.3" stroke-dasharray="12 8"/>
<path d="M466.0 636.9 L470.5 634.9 L475.0 634.0 L479.0 633.8 L483.0 633.1 L487.0 632.4 L490.6 631.9 L494.2 631.0 L497.8 631.4 L501.4 631.0 L505.0 630.0 L509.0 630.1 L513.0 630.2 L517.0 629.9 L521.0 629.6 L525.0 630.5 L529.0 630.0 L533.0 630.0 L537.0 628.8 L541.0 629.6 L545.0 628.8 L548.9 628.5 L552.7 628.6 L556.6 628.4 L560.4 630.1 L564.3 629.8 L568.1 630.1 L572.0 629.6 L577.0 631.7 L582.0 633.5 L585.6 633.7 L589.2 635.1 L592.8 636.4 L596.4 636.7 L600.0 638.3 L604.0 639.8 L608.0 639.7 L612.0 640.1 L616.0 642.0 L620.0 642.3 L623.8 643.1 L627.5 645.8 L631.2 646.5 L635.0 648.0 L638.5 651.3 L642.0 654.4 L645.8 657.1 L649.6 660.3 L653.4 662.8 L657.2 665.5 L661.0 669.8 L664.8 671.7 L668.6 675.6 L672.4 677.6 L676.2 681.8 L680.0 684.0 L686.4 686.3 L690.2 688.1 L694.0 689.0 L697.9 690.1 L701.7 691.0 L705.5 692.0 L709.3 693.9 L713.2 694.5 L717.0 696.6 L720.9 698.8 L724.7 699.8 L804.4 699.8 L808.3 698.4 L812.2 698.6 L816.1 697.6 L820.0 696.0 L823.6 693.8 L827.2 691.6 L830.8 689.6 L834.4 687.4 L838.0 685.5 L841.8 684.6 L845.6 681.8 L849.4 679.5 L853.2 677.9 L857.0 676.8 L860.5 675.4 L864.0 674.1 L867.6 671.5 L871.1 669.7 L874.6 668.0 L879.0 667.5 L883.3 667.2 L887.6 665.8 L892.0 665.6 L896.1 665.6 L900.2 665.4 L904.3 665.3 L908.4 664.4 L912.5 664.8 L916.1 663.9 L919.8 663.8 L923.5 664.3 L927.1 663.0 L930.8 663.0 L934.4 662.1 L938.0 661.4 L941.7 660.9 L945.4 661.7 L949.0 660.8 L952.6 660.3 L956.2 658.7 L959.8 658.2 L963.4 657.2 L967.0 656.0 L970.8 655.7 L974.6 654.9 L978.4 653.0 L982.2 653.0 L986.0 651.3 L989.8 651.1 L993.6 649.5 L997.4 649.0 L1001.2 647.4 L1005.0 646.5 L1008.8 645.5 L1012.6 644.5 L1016.4 644.7 L1020.2 642.8 L1024.0 642.5 L1027.8 640.5 L1031.6 640.4 L1035.4 639.1 L1039.2 637.4 L1043.0 636.1 L1046.9 635.8 L1050.8 633.8 L1054.7 633.3 L1058.6 632.6 L1062.5 632.1 L1066.0 631.7 L1069.5 630.9 L1073.0 630.5 L1076.5 630.6 L1080.0 630.5 L1083.5 631.1 L1087.1 631.2 L1090.6 630.8 L1094.1 630.3 L1097.6 629.9 L1101.2 631.0 L1104.7 630.2 L1108.2 630.5 L1111.8 629.3 L1115.3 629.6 L1118.8 630.5 L1122.4 630.4 L1125.9 630.5 L1129.4 630.0 L1132.9 629.7 L1136.5 629.9 L1140.0 629.7 L1144.3 631.3 L1148.7 631.4 L1153.1 632.8 L1157.4 633.7 L1161.2 634.6 L1165.1 636.6 L1168.9 636.7 L1172.8 639.0 L1176.6 640.0 L1180.4 641.4 L1184.2 640.6 L1188.1 642.1 L1191.9 642.9 L1195.7 643.3 L1199.2 644.8 L1202.7 645.3 L1206.3 645.7 L1209.8 646.9 L1213.3 648.0 L1217.3 652.3 L1221.2 655.8 L1225.2 658.2 L1229.2 662.4 L1233.5 666.6 L1237.7 671.4 L1242.0 676.8 L1246.0 679.2 L1250.0 683.1 L1254.0 685.8 L1258.0 689.5 L1261.5 691.4 L1265.0 692.3 L1268.5 692.7 L1272.0 694.7 L1275.5 695.9 L1279.0 696.2 L1282.5 697.1 L1286.0 697.3 L1289.5 697.8 L1293.0 699.0 L1296.5 698.9 L1300.0 699.8 L1321.0 699.8" fill="none" stroke="#cc1a6a" stroke-width="1.3" stroke-dasharray="12 8"/>
<path d="M466.0 677.0 L469.7 676.6 L473.4 674.1 L477.1 672.8 L480.9 673.2 L484.6 670.8 L488.3 669.5 L492.0 669.0 L495.6 668.9 L499.2 668.2 L502.8 668.7 L506.4 667.4 L510.0 667.5 L513.6 668.2 L517.3 667.2 L520.9 667.7 L524.5 668.2 L528.2 667.8 L531.8 668.2 L535.5 667.8 L539.1 666.8 L542.7 668.1 L546.4 667.6 L550.0 667.5 L554.2 666.1 L558.5 664.8 L562.8 664.7 L567.0 663.0 L570.8 662.3 L574.6 662.1 L578.4 661.0 L582.2 660.5 L586.0 659.1 L589.8 658.5 L593.6 657.6 L597.4 656.2 L601.2 656.5 L605.0 655.0 L608.5 653.9 L612.1 653.8 L615.6 653.2 L619.2 651.9 L622.7 650.2 L626.3 650.4 L629.8 649.3 L633.4 647.7 L636.9 646.7 L640.5 646.6 L644.0 645.7 L647.6 644.0 L651.3 644.4 L655.0 642.8 L658.6 641.8 L662.2 640.7 L665.9 640.1 L669.5 639.6 L673.2 637.6 L676.9 636.8 L680.5 636.0 L684.2 635.9 L688.0 635.3 L691.8 635.6 L695.5 635.3 L699.2 634.9 L703.0 635.1 L706.8 634.6 L710.5 633.7 L714.2 635.0 L718.0 634.0 L721.6 633.9 L725.2 634.1 L728.8 634.1 L732.4 635.1 L736.0 634.5 L740.1 634.9 L744.2 633.9 L748.4 633.4 L752.5 632.7 L756.6 633.0 L760.7 634.4 L764.9 634.1 L769.0 635.5 L773.2 636.0 L777.3 637.0 L780.8 637.5 L784.3 638.3 L787.8 638.8 L791.3 639.4 L794.8 640.9 L798.6 641.9 L802.5 643.3 L806.3 644.0 L810.2 644.3 L814.0 645.7 L817.8 647.1 L821.6 647.2 L825.4 648.9 L829.2 650.7 L833.0 651.3 L837.0 653.9 L841.0 655.2 L845.0 657.8 L849.0 659.2 L852.6 662.4 L856.2 665.6 L859.8 668.9 L863.4 672.0 L867.0 676.0 L870.6 678.7 L874.2 681.5 L877.8 684.7 L881.3 686.3 L884.8 687.5 L888.3 688.3 L891.8 690.3 L895.3 691.1 L899.6 693.0 L903.9 694.1 L908.2 696.0 L912.5 696.7 L916.6 696.5 L920.7 697.9 L924.8 698.8 L928.9 698.9 L933.0 699.8 L1010.0 699.8 L1016.0 696.7 L1019.6 694.2 L1023.1 693.1 L1026.7 690.8 L1030.2 688.6 L1033.8 686.2 L1037.3 685.8 L1040.9 682.9 L1044.4 680.5 L1048.0 679.2 L1051.5 677.3 L1055.0 675.9 L1058.6 675.5 L1062.1 672.9 L1065.6 672.0 L1069.9 669.4 L1074.3 667.0 L1078.7 665.4 L1083.0 663.2 L1086.5 662.6 L1090.1 662.6 L1093.6 663.1 L1097.2 663.2 L1100.7 662.4 L1104.3 662.9 L1107.8 661.7 L1111.4 662.2 L1115.0 663.0 L1118.6 661.7 L1122.1 661.9 L1125.7 662.4 L1129.3 662.2 L1132.9 662.8 L1136.4 662.7 L1140.0 662.4 L1143.8 661.4 L1147.6 660.1 L1151.4 659.1 L1155.2 658.2 L1159.0 657.6 L1162.8 655.9 L1166.6 655.9 L1170.4 654.2 L1174.2 654.4 L1178.0 652.8 L1181.5 651.9 L1185.1 649.9 L1188.6 649.5 L1192.2 648.6 L1195.7 647.3 L1199.6 646.4 L1203.4 647.0 L1207.3 646.1 L1211.1 647.1 L1215.0 646.5 L1218.8 644.4 L1222.6 644.1 L1226.4 643.4 L1230.2 641.9 L1234.0 640.0 L1237.8 638.5 L1241.6 637.9 L1245.4 636.1 L1249.2 635.3 L1253.0 634.5 L1256.9 634.1 L1260.7 633.1 L1264.6 630.8 L1268.4 630.5 L1272.3 629.7 L1275.9 629.9 L1279.5 629.1 L1283.1 630.0 L1286.7 630.1 L1290.3 629.5 L1294.0 629.1 L1297.6 629.8 L1301.2 629.2 L1304.8 628.6 L1308.4 628.7 L1312.0 629.0 L1316.5 628.5 L1321.0 629.0" fill="none" stroke="#cc1a6a" stroke-width="1.3" stroke-dasharray="12 8"/>
<path d="M466.0 627.0 L470.0 625.0 L474.0 624.5 L478.0 625.6 L482.0 626.0 L488.0 623.0 L493.0 625.5 L497.5 623.2 L502.0 621.7 L505.8 622.4 L509.5 624.5 L513.0 699.8 L580.5 699.8 L585.2 698.4 L590.0 697.0 L593.8 695.9 L597.5 694.7 L601.2 693.5 L605.0 692.5 L610.0 691.9 L615.0 692.5 L619.0 689.2 L623.0 687.0 L626.8 686.9 L630.6 685.4 L634.4 685.6 L638.2 685.3 L642.0 684.0 L645.8 683.5 L649.7 682.2 L653.5 679.1 L657.3 677.7 L661.2 677.5 L665.0 675.5 L668.8 675.7 L672.5 674.8 L676.2 675.9 L680.0 675.5 L684.0 675.6 L688.0 674.7 L692.0 672.4 L696.0 671.8 L700.0 671.5 L703.9 669.6 L707.7 671.2 L711.6 668.7 L715.4 669.2 L719.3 668.0 L723.1 667.4 L727.0 666.5 L731.0 663.0 L735.5 664.7 L740.0 666.3 L744.0 666.6 L748.0 665.6 L752.0 664.4 L756.0 663.5 L760.0 664.0 L763.8 663.9 L767.5 665.0 L771.2 663.1 L775.0 664.4 L778.8 664.3 L782.5 663.2 L786.2 663.3 L790.0 664.0 L793.8 664.3 L797.5 663.6 L801.2 663.4 L805.0 663.5 L808.8 662.4 L812.5 663.7 L816.2 663.3 L820.0 663.0 L823.8 662.9 L827.5 662.2 L831.2 663.2 L835.0 663.0 L838.8 662.2 L842.5 660.9 L846.2 660.8 L850.0 661.5 L854.0 661.0 L858.0 661.2 L862.0 663.0 L866.0 663.0 L872.0 657.0 L876.0 655.9 L880.0 654.5 L885.0 651.0 L890.0 649.0 L895.0 647.0 L900.0 643.0 L904.0 642.0 L908.0 641.0 L912.0 639.0 L916.0 637.8 L920.0 635.0 L925.0 632.9 L930.0 630.0 L935.0 627.1 L940.0 624.0 L943.5 626.5 L947.0 626.7 L950.8 625.0 L954.5 625.6 L958.2 625.2 L962.0 623.5 L966.0 624.7 L970.0 626.0 L975.0 625.0 L980.0 622.4 L983.6 621.5 L987.1 621.9 L990.7 621.5 L994.3 621.6 L997.9 622.2 L1001.4 620.8 L1005.0 621.5 L1010.0 624.0 L1014.5 621.6 L1019.0 620.0 L1024.0 623.0 L1028.0 623.0 L1032.0 620.8 L1036.0 619.6 L1040.0 620.8 L1044.0 618.8 L1047.5 619.1 L1051.0 618.0 L1054.5 619.6 L1058.0 618.8 L1061.5 619.0 L1065.0 620.0 L1069.0 619.7 L1073.0 618.6 L1077.0 617.1 L1081.0 616.4 L1087.0 616.5 L1090.0 699.8 L1160.6 699.8 L1164.3 698.3 L1168.1 696.9 L1171.8 695.3 L1175.8 694.0 L1179.8 691.9 L1183.7 692.3 L1187.7 690.5 L1191.7 690.5 L1195.7 689.1 L1199.7 688.4 L1203.7 688.0 L1207.7 686.9 L1211.7 685.2 L1215.6 683.7 L1219.6 682.6 L1223.8 682.2 L1227.9 681.0 L1232.1 677.9 L1236.2 676.7 L1240.4 676.2 L1244.2 676.1 L1248.0 675.7 L1251.9 674.4 L1255.7 672.5 L1259.5 672.2 L1263.6 670.2 L1267.7 671.1 L1271.8 670.4 L1275.9 669.0 L1280.0 667.4 L1284.1 665.6 L1288.2 662.6 L1291.9 663.2 L1295.7 661.6 L1299.4 661.0 L1303.6 661.0 L1307.8 658.3 L1312.0 657.8 L1316.8 657.6 L1321.7 659.4" fill="none" stroke="#1f6091" stroke-width="1.3"/>
<path d="M466.0 691.6 L470.5 693.2 L475.0 693.5 L478.5 695.9 L482.0 696.8 L487.0 698.0 L492.0 698.0 L495.0 699.8 L580.0 699.8 L585.0 697.0 L590.0 695.5 L594.0 694.0 L598.0 692.2 L602.0 690.7 L606.0 688.5 L610.0 687.5 L613.8 685.3 L617.5 684.0 L621.2 681.9 L625.0 680.6 L629.0 678.6 L633.0 676.0 L637.0 674.2 L641.0 673.3 L645.0 671.0 L650.0 667.9 L655.0 665.0 L660.0 664.0 L665.0 663.0 L668.6 663.4 L672.2 662.8 L675.8 662.3 L679.5 663.5 L683.1 663.1 L686.7 663.3 L690.3 663.2 L693.9 663.8 L697.5 662.8 L701.2 663.4 L704.8 662.8 L708.4 663.1 L712.0 663.0 L716.0 661.7 L719.9 659.6 L723.8 657.7 L727.8 656.8 L731.8 656.2 L735.8 655.9 L739.8 655.1 L743.8 654.4 L747.8 653.1 L751.8 652.3 L755.7 650.4 L759.7 649.7 L763.7 648.2 L767.7 647.4 L771.7 647.2 L775.7 645.7 L779.7 644.2 L783.7 643.1 L787.6 642.1 L791.6 641.7 L795.6 640.0 L799.6 639.3 L803.6 638.8 L807.6 637.7 L811.6 637.2 L815.5 635.4 L819.5 634.5 L823.5 633.7 L827.5 632.6 L831.5 631.8 L835.5 631.7 L839.5 630.5 L844.2 628.6 L849.0 626.5 L852.7 626.1 L856.5 625.9 L860.2 627.0 L863.9 626.8 L867.7 627.0 L871.4 626.5 L875.0 626.2 L878.5 626.8 L882.1 627.5 L885.7 627.0 L889.3 627.7 L892.9 626.6 L896.4 628.0 L900.0 627.3 L903.8 626.4 L907.6 626.8 L911.4 626.1 L915.2 627.2 L919.0 626.5 L923.0 628.0 L927.0 629.7 L931.0 630.6 L935.0 631.3 L938.7 632.8 L942.3 633.0 L946.0 633.7 L950.3 635.8 L954.7 636.8 L959.0 637.7 L962.9 638.0 L966.9 639.6 L970.8 639.2 L974.7 640.0 L978.7 640.5 L982.7 641.3 L986.7 642.9 L990.7 644.0 L994.7 646.0 L998.7 648.9 L1002.7 653.9 L1006.6 657.6 L1010.6 663.1 L1014.6 667.2 L1018.6 670.7 L1022.6 675.2 L1026.6 679.3 L1030.6 684.7 L1034.5 687.5 L1038.5 690.3 L1042.5 690.8 L1046.5 692.4 L1050.5 693.8 L1054.5 694.3 L1058.5 694.9 L1062.5 696.2 L1066.4 697.9 L1070.4 698.3 L1074.4 699.0 L1078.4 699.8 L1159.0 699.8 L1162.6 697.7 L1166.2 696.7 L1169.8 694.6 L1173.3 692.9 L1176.9 690.7 L1180.5 688.3 L1184.1 686.9 L1187.7 684.7 L1191.2 683.2 L1194.8 680.9 L1198.3 678.2 L1201.9 676.2 L1205.4 674.4 L1209.0 672.9 L1212.5 670.6 L1216.1 668.5 L1219.6 666.4 L1223.9 664.8 L1228.1 661.5 L1232.4 660.0 L1236.2 660.4 L1240.0 660.1 L1243.9 660.6 L1247.7 661.2 L1251.5 660.8 L1255.0 660.2 L1258.6 661.2 L1262.1 659.6 L1265.7 660.2 L1269.2 660.0 L1272.8 659.3 L1276.3 659.7 L1279.9 659.3 L1283.4 659.2 L1287.4 658.3 L1291.4 657.9 L1295.4 656.0 L1299.4 656.0 L1303.1 655.0 L1306.8 654.9 L1310.6 653.1 L1314.3 653.5 L1318.0 651.6 L1321.7 651.3" fill="none" stroke="#cc1a6a" stroke-width="1.3"/>
<path d="M466.0 681.5 L469.5 680.3 L473.0 679.0 L477.0 681.7 L481.0 683.5 L487.0 685.0 L491.0 686.2 L495.0 686.0 L499.0 687.7 L503.0 690.0 L509.0 690.5 L513.0 699.8 L580.0 699.8 L585.0 698.3 L590.0 696.0 L593.8 695.0 L597.5 693.5 L601.2 691.3 L605.0 690.5 L608.8 688.0 L612.5 686.8 L616.2 685.6 L620.0 683.5 L623.8 681.5 L627.5 680.3 L631.2 678.3 L635.0 677.0 L638.5 674.1 L642.0 670.0 L647.0 667.7 L652.0 664.0 L656.3 663.5 L660.7 664.1 L665.0 663.0 L668.5 662.3 L672.1 663.5 L675.6 663.7 L679.1 662.5 L682.6 663.4 L686.2 663.2 L689.7 663.9 L693.2 662.7 L696.8 663.2 L700.3 663.8 L703.8 663.4 L707.3 662.9 L710.9 662.6 L714.4 664.0 L717.9 663.2 L721.5 664.1 L725.0 662.7 L728.5 663.8 L732.0 663.9 L735.6 664.0 L739.1 662.6 L742.6 663.2 L746.2 662.7 L749.7 663.9 L753.2 663.2 L756.7 664.2 L760.3 663.3 L763.8 664.0 L767.3 664.1 L770.8 663.1 L774.4 663.7 L777.9 664.3 L781.4 663.7 L785.0 663.4 L788.5 663.3 L792.0 664.1 L795.5 663.2 L799.1 663.9 L802.6 663.8 L806.1 663.8 L809.7 663.2 L813.2 664.0 L816.7 664.5 L820.2 663.5 L823.8 663.6 L827.3 664.5 L830.8 664.0 L834.4 663.5 L837.9 663.1 L841.4 664.3 L844.9 663.7 L848.5 663.9 L852.0 664.0 L855.8 660.2 L859.6 657.4 L863.4 653.8 L867.4 651.6 L871.4 648.3 L875.4 645.4 L879.4 643.5 L883.2 640.9 L887.0 637.4 L890.9 632.7 L894.7 630.2 L898.5 626.7 L905.0 622.0 L908.5 620.3 L912.0 618.0 L915.8 615.3 L919.6 613.0 L925.0 616.0 L930.0 619.6 L935.0 622.4 L939.0 625.9 L943.0 628.0 L947.0 630.4 L951.0 632.8 L955.0 636.0 L958.8 638.1 L962.5 640.4 L966.2 642.9 L970.0 646.0 L973.8 648.3 L977.5 652.0 L981.2 654.3 L985.0 657.0 L989.0 660.8 L993.0 664.3 L997.0 667.0 L1000.5 669.7 L1004.0 670.8 L1007.5 674.4 L1011.0 675.3 L1014.5 678.7 L1018.0 680.5 L1022.0 683.2 L1026.0 685.2 L1030.0 686.9 L1034.0 688.6 L1038.0 691.5 L1041.9 691.5 L1045.7 693.0 L1049.6 693.0 L1053.4 694.1 L1057.3 694.3 L1061.1 694.8 L1065.0 696.0 L1071.0 699.8 L1159.0 699.8 L1163.3 697.2 L1167.7 695.6 L1172.0 693.0 L1175.7 690.7 L1179.3 688.3 L1183.0 686.2 L1186.7 684.0 L1190.3 681.7 L1194.0 679.4 L1197.7 677.3 L1201.3 676.0 L1205.0 673.6 L1208.6 670.7 L1212.3 668.8 L1215.9 666.6 L1219.6 665.0 L1223.4 663.3 L1227.3 661.4 L1231.1 661.1 L1235.0 659.3 L1238.8 657.8 L1243.1 658.2 L1247.4 659.5 L1251.7 659.2 L1256.0 660.0 L1259.7 660.0 L1263.3 660.5 L1267.0 659.9 L1270.6 659.9 L1274.2 659.4 L1277.9 660.3 L1281.5 659.9 L1285.2 659.1 L1288.8 659.1 L1292.5 659.4 L1296.2 659.2 L1299.8 659.1 L1303.5 658.5 L1307.1 659.0 L1310.8 659.2 L1314.4 659.2 L1318.0 658.6 L1321.7 658.6" fill="none" stroke="#2e8a12" stroke-width="1.3"/></svg>
<span id="y1_50_2" class="t" style="right:923.2px;top:473.69px;font-size:10.60px;color:#3a3a3a;font-weight:400;font-family:'Liberation Sans',sans-serif;transform-origin:100% 0;">50.2</span>
<span id="y1_40" class="t" style="right:923.2px;top:492.00px;font-size:10.60px;color:#3a3a3a;font-weight:400;font-family:'Liberation Sans',sans-serif;transform-origin:100% 0;">40</span>
<span id="y1_30" class="t" style="right:923.2px;top:509.95px;font-size:10.60px;color:#3a3a3a;font-weight:400;font-family:'Liberation Sans',sans-serif;transform-origin:100% 0;">30</span>
<span id="y1_20" class="t" style="right:923.2px;top:527.90px;font-size:10.60px;color:#3a3a3a;font-weight:400;font-family:'Liberation Sans',sans-serif;transform-origin:100% 0;">20</span>
<span id="y1_10" class="t" style="right:923.2px;top:545.85px;font-size:10.60px;color:#3a3a3a;font-weight:400;font-family:'Liberation Sans',sans-serif;transform-origin:100% 0;">10</span>
<span id="y1_0" class="t" style="right:923.2px;top:563.80px;font-size:10.60px;color:#3a3a3a;font-weight:400;font-family:'Liberation Sans',sans-serif;transform-origin:100% 0;">0</span>
<span id="y2_50_2" class="t" style="right:923.2px;top:603.69px;font-size:10.60px;color:#3a3a3a;font-weight:400;font-family:'Liberation Sans',sans-serif;transform-origin:100% 0;">50.2</span>
<span id="y2_40" class="t" style="right:923.2px;top:622.00px;font-size:10.60px;color:#3a3a3a;font-weight:400;font-family:'Liberation Sans',sans-serif;transform-origin:100% 0;">40</span>
<span id="y2_30" class="t" style="right:923.2px;top:639.95px;font-size:10.60px;color:#3a3a3a;font-weight:400;font-family:'Liberation Sans',sans-serif;transform-origin:100% 0;">30</span>
<span id="y2_20" class="t" style="right:923.2px;top:657.90px;font-size:10.60px;color:#3a3a3a;font-weight:400;font-family:'Liberation Sans',sans-serif;transform-origin:100% 0;">20</span>
<span id="y2_10" class="t" style="right:923.2px;top:675.85px;font-size:10.60px;color:#3a3a3a;font-weight:400;font-family:'Liberation Sans',sans-serif;transform-origin:100% 0;">10</span>
<span id="y2_0" class="t" style="right:923.2px;top:693.80px;font-size:10.60px;color:#3a3a3a;font-weight:400;font-family:'Liberation Sans',sans-serif;transform-origin:100% 0;">0</span>
<div style="left:466px;top:703px;width:856px;height:2px;background:#666;"></div>
<div style="left:504px;top:705px;width:1px;height:4px;background:#666;"></div>
<span id="xl0" class="t" style="left:503.6px;top:708.32px;font-size:10.80px;color:#3a3a3a;font-weight:400;font-family:'Liberation Sans',sans-serif;transform:translateX(-50%) ">14:45</span>
<div style="left:611px;top:705px;width:1px;height:4px;background:#666;"></div>
<span id="xl1" class="t" style="left:610.6px;top:708.32px;font-size:10.80px;color:#3a3a3a;font-weight:400;font-family:'Liberation Sans',sans-serif;transform:translateX(-50%) ">15:00</span>
<div style="left:718px;top:705px;width:1px;height:4px;background:#666;"></div>
<span id="xl2" class="t" style="left:717.6px;top:708.32px;font-size:10.80px;color:#3a3a3a;font-weight:400;font-family:'Liberation Sans',sans-serif;transform:translateX(-50%) ">15:15</span>
<div style="left:825px;top:705px;width:1px;height:4px;background:#666;"></div>
<span id="xl3" class="t" style="left:824.6px;top:708.32px;font-size:10.80px;color:#3a3a3a;font-weight:400;font-family:'Liberation Sans',sans-serif;transform:translateX(-50%) ">15:30</span>
<div style="left:932px;top:705px;width:1px;height:4px;background:#666;"></div>
<span id="xl4" class="t" style="left:931.6px;top:708.32px;font-size:10.80px;color:#3a3a3a;font-weight:400;font-family:'Liberation Sans',sans-serif;transform:translateX(-50%) ">15:45</span>
<div style="left:1039px;top:705px;width:1px;height:4px;background:#666;"></div>
<span id="xl5" class="t" style="left:1038.6px;top:708.32px;font-size:10.80px;color:#3a3a3a;font-weight:400;font-family:'Liberation Sans',sans-serif;transform:translateX(-50%) ">16:00</span>
<div style="left:1146px;top:705px;width:1px;height:4px;background:#666;"></div>
<span id="xl6" class="t" style="left:1145.6px;top:708.32px;font-size:10.80px;color:#3a3a3a;font-weight:400;font-family:'Liberation Sans',sans-serif;transform:translateX(-50%) ">16:15</span>
<div style="left:1253px;top:705px;width:1px;height:4px;background:#666;"></div>
<span id="xl7" class="t" style="left:1252.6px;top:708.32px;font-size:10.80px;color:#3a3a3a;font-weight:400;font-family:'Liberation Sans',sans-serif;transform:translateX(-50%) ">16:30</span>
<div style="left:466px;top:703px;width:1px;height:6px;background:#666;"></div>
<div style="left:1321px;top:703px;width:1px;height:6px;background:#666;"></div>
<div style="left:466px;top:728px;width:31.5px;height:32px;background:#fff;border:1px solid #dcdcdc;border-radius:3px;box-sizing:border-box;"></div>
<svg style="left:476px;top:738px;" width="12" height="12" viewBox="0 0 12 12"><path d="M8 2.5 L8 9.5 L4 6 Z" fill="#333"/></svg>
<div style="left:502px;top:728px;width:31.5px;height:32px;background:#fff;border:1px solid #dcdcdc;border-radius:3px;box-sizing:border-box;"></div>
<div style="left:538px;top:728px;width:33.5px;height:32px;background:#fff;border:1px solid #dcdcdc;border-radius:3px;box-sizing:border-box;"></div>
<div style="left:750px;top:728px;width:144.5px;height:32px;background:#fff;border:1px solid #dcdcdc;border-radius:3px;box-sizing:border-box;"></div>
<div style="left:899px;top:728px;width:103px;height:32px;background:#fff;border:1px solid #dcdcdc;border-radius:3px;box-sizing:border-box;"></div>
<div style="left:970px;top:728px;width:1px;height:32px;background:#dcdcdc;"></div>
<div style="left:1006.5px;top:728px;width:31px;height:32px;background:#fff;border:1px solid #dcdcdc;border-radius:3px;box-sizing:border-box;border-color:#eeeeee;"></div>
<div style="left:1216px;top:728px;width:31.5px;height:32px;background:#fff;border:1px solid #dcdcdc;border-radius:3px;box-sizing:border-box;"></div>
<div style="left:1252px;top:728px;width:33.5px;height:32px;background:#fff;border:1px solid #dcdcdc;border-radius:3px;box-sizing:border-box;"></div>
<div style="left:1290px;top:728px;width:31.5px;height:32px;background:#fff;border:1px solid #dcdcdc;border-radius:3px;box-sizing:border-box;"></div>
<svg style="left:1300px;top:738px;" width="12" height="12" viewBox="0 0 12 12"><path d="M4 2.5 L4 9.5 L8 6 Z" fill="#333"/></svg>
<svg style="left:510px;top:736px;" width="16" height="16" viewBox="0 0 16 16"><rect x="1.5" y="3" width="13" height="12" rx="1" fill="none" stroke="#8c8c8c" stroke-width="1.2"/><path d="M1.5 6.5 L14.5 6.5 M4.5 1 L4.5 4.5 M11.5 1 L11.5 4.5" stroke="#8c8c8c" stroke-width="1.2"/><rect x="9.5" y="10" width="3" height="3" fill="#8c8c8c"/></svg>
<svg style="left:546px;top:736px;" width="16" height="16" viewBox="0 0 16 16"><circle cx="8" cy="8" r="6.8" fill="none" stroke="#8c8c8c" stroke-width="1.2"/><path d="M8 3.8 L8 8.3 L11.5 8.3" fill="none" stroke="#8c8c8c" stroke-width="1.2"/></svg>
<svg style="left:1224px;top:736px;" width="16" height="16" viewBox="0 0 16 16"><rect x="1.5" y="3" width="13" height="12" rx="1" fill="none" stroke="#8c8c8c" stroke-width="1.2"/><path d="M1.5 6.5 L14.5 6.5 M4.5 1 L4.5 4.5 M11.5 1 L11.5 4.5" stroke="#8c8c8c" stroke-width="1.2"/><rect x="9.5" y="10" width="3" height="3" fill="#8c8c8c"/></svg>
<svg style="left:1260px;top:736px;" width="16" height="16" viewBox="0 0 16 16"><circle cx="8" cy="8" r="6.8" fill="none" stroke="#8c8c8c" stroke-width="1.2"/><path d="M8 3.8 L8 8.3 L11.5 8.3" fill="none" stroke="#8c8c8c" stroke-width="1.2"/></svg>
<svg style="left:1014px;top:736px;" width="16" height="16" viewBox="0 0 16 16"><path d="M3.5 8 A5.5 5.5 0 1 0 5 4.2" fill="none" stroke="#d5d5d5" stroke-width="1.2"/><path d="M1.5 3.5 L5.5 3.8 L5 7.5" fill="none" stroke="#d5d5d5" stroke-width="1.2"/><path d="M9 5 L9 8.5 L11.5 10" fill="none" stroke="#d5d5d5" stroke-width="1.2"/></svg>
<svg style="left:758px;top:735px;" width="18" height="18" viewBox="0 0 18 18"><path d="M1.5 1 L1.5 16.5 L17 16.5" fill="none" stroke="#8c8c8c" stroke-width="1.2"/><path d="M3.5 15 Q6 8 15 5 M3.5 15 Q7 11 15 9.5 M3.5 12 Q6 5 15 2" fill="none" stroke="#8c8c8c" stroke-width="1.1"/></svg>
<span id="stacked" class="t" style="left:783.0px;top:735.64px;font-size:14.60px;color:#1d1d1d;font-weight:400;font-family:'Liberation Sans',sans-serif;transform-origin:0 0;transform:scaleX(0.9438);">Stacked trend</span>
<svg style="left:871px;top:739px;" width="12" height="8" viewBox="0 0 12 8"><path d="M1 7 L11 7 L6 2 Z" fill="#888"/></svg>
<span id="hours" class="t" style="left:912.0px;top:735.64px;font-size:14.60px;color:#1d1d1d;font-weight:400;font-family:'Liberation Sans',sans-serif;transform-origin:0 0;transform:scaleX(0.9448);">2 hours</span>
<svg style="left:978px;top:735px;" width="16" height="17" viewBox="0 0 16 17"><path d="M4.5 7.5 L4.5 5 Q4.5 1.5 8 1.5 Q11.5 1.5 11.5 5 L11.5 7.5" fill="none" stroke="#333" stroke-width="1.4"/><rect x="2.5" y="7.5" width="11" height="8.5" rx="1" fill="none" stroke="#333" stroke-width="1.4"/><circle cx="8" cy="11.5" r="1.2" fill="#333"/></svg>
<div style="left:466px;top:768px;width:855px;height:31px;background:#f0f0f0;"></div>
<svg style="left:0px;top:0px;pointer-events:none;" width="1380" height="900" viewBox="0 0 1380 900"><path d="M466.0 772.8 L470.2 794.2 L476.6 770.0 L481.3 775.9 L484.2 773.3 L489.5 796.5 L493.7 774.2 L498.2 780.1 L501.4 771.4 L504.4 785.3 L511.1 773.5 L517.1 788.3 L522.9 770.6 L526.7 781.3 L532.5 772.5 L535.4 791.1 L538.8 771.7 L545.0 792.7 L551.5 775.3 L554.2 788.4 L558.9 770.1 L563.3 775.7 L566.3 773.6 L569.4 783.6 L575.9 771.2 L578.5 795.5 L583.4 770.1 L586.3 785.6 L592.9 772.5 L597.2 782.2 L600.1 773.5 L603.4 782.9 L610.2 770.3 L615.2 782.9 L618.4 771.6 L625.4 773.5 L628.4 774.2 L635.2 791.8 L640.4 770.3 L644.6 781.3 L649.7 774.6 L652.6 789.2 L659.0 773.5 L663.5 787.8 L670.5 773.4 L673.1 778.3 L677.0 772.6 L680.5 786.8 L684.5 770.5 L689.8 795.0 L695.8 770.2 L701.8 778.1 L706.6 774.3 L710.2 779.8 L714.6 771.4 L721.4 787.9 L725.6 775.2 L729.8 781.5 L733.1 775.1 L736.7 796.3 L743.6 771.0 L750.4 773.8 L755.6 770.1 L758.4 792.5 L762.6 773.7 L769.5 789.0 L772.6 773.4 L775.7 795.4 L780.7 774.2 L783.5 786.7 L789.2 774.6 L793.4 776.2 L796.7 774.3 L802.6 776.4 L807.4 770.6 L810.1 784.8 L813.4 773.8 L816.2 778.8 L819.8 770.1 L823.0 786.5 L828.1 772.3 L831.3 785.9 L838.1 773.2 L844.8 796.8 L851.8 775.3 L856.8 784.9 L861.7 775.5 L864.5 782.1 L869.4 771.8 L875.2 780.2 L878.1 774.2 L882.7 785.7 L888.0 770.3 L893.2 788.5 L899.7 771.4 L905.9 780.0 L911.2 775.3 L913.9 783.2 L919.1 774.1 L923.5 795.8 L926.8 773.6 L930.1 795.9 L934.2 772.8 L939.1 796.9 L945.1 772.0 L951.2 797.3 L958.0 773.5 L964.8 773.8 L971.1 770.6 L975.2 791.9 L981.2 771.2 L984.7 794.8 L987.7 775.6 L994.6 788.6 L1000.4 772.8 L1005.3 788.6 L1010.6 771.4 L1014.3 785.1 L1017.7 772.6 L1024.4 797.0 L1027.4 774.8 L1030.2 791.5 L1036.5 773.6 L1040.0 796.1 L1043.7 771.8 L1049.8 774.1 L1055.9 775.4 L1062.5 776.5 L1069.2 775.8 L1072.1 789.9 L1075.7 773.6 L1080.4 789.2 L1086.7 772.4 L1090.1 790.9 L1094.7 773.7 L1099.8 786.9 L1103.1 772.4 L1107.1 793.4 L1112.0 771.1 L1117.7 781.7 L1120.8 773.8 L1124.9 786.8 L1130.1 774.6 L1136.6 779.9 L1140.0 773.3 L1144.0 797.0 L1149.0 772.8 L1155.4 789.7 L1161.7 773.1 L1164.6 780.3 L1168.4 773.2 L1171.2 797.2 L1177.9 770.3 L1181.0 793.6 L1184.0 774.9 L1190.9 781.9 L1195.2 775.3 L1200.0 794.3 L1205.6 772.2 L1209.3 789.8 L1213.6 771.1 L1218.8 776.7 L1223.9 770.1 L1229.5 797.0 L1234.1 775.2 L1239.7 775.7 L1245.6 771.6 L1248.7 786.7 L1254.3 771.4 L1258.3 779.5 L1262.3 773.6 L1267.3 775.2 L1269.9 771.1 L1275.9 781.4 L1278.8 770.8 L1282.3 784.5 L1288.8 771.3 L1292.3 781.0 L1296.7 775.1 L1303.7 775.0 L1309.4 773.0 L1312.1 778.1 L1316.4 772.8" fill="none" stroke="#4a90c8" stroke-width="0.9"/>
<path d="M466.0 771.3 L467.9 784.5 L469.6 772.1 L472.0 796.3 L474.7 770.1 L477.3 796.1 L479.1 771.7 L482.6 795.0 L484.7 772.5 L488.5 786.0 L491.0 773.9 L492.7 780.3 L494.9 770.6 L496.7 791.3 L500.2 770.7 L503.2 784.7 L505.6 772.2 L507.3 796.3 L509.3 772.7 L511.8 791.2 L514.8 771.8 L517.1 781.6 L520.3 771.0 L523.2 787.0 L526.9 772.9 L529.1 777.9 L530.9 771.7 L534.3 794.5 L537.1 770.2 L540.2 782.2 L543.2 773.5 L545.4 783.6 L548.4 772.3 L551.1 780.7 L554.9 771.9 L558.1 796.3 L561.3 772.6 L565.3 781.1 L567.5 771.5 L570.7 797.0 L573.4 770.7 L575.2 796.3 L578.6 770.5 L580.7 789.7 L584.4 770.3 L587.0 786.5 L590.7 773.3 L594.4 791.9 L596.9 771.4 L600.6 778.3 L602.5 770.7 L604.6 792.8 L607.3 772.4 L609.4 797.4 L612.0 771.5 L614.9 778.4 L618.1 772.1 L621.2 784.0 L622.8 773.6 L626.3 780.0 L629.8 771.6 L632.3 795.4 L635.3 770.2 L637.0 793.3 L638.9 771.4 L640.5 797.5 L642.4 770.4 L644.8 797.0 L648.5 772.5 L650.4 792.5 L652.8 771.5 L654.6 780.5 L658.5 771.9 L661.3 795.8 L663.0 771.4 L665.2 780.9 L667.1 770.1 L671.0 786.9 L672.8 772.2 L674.4 786.9 L678.3 773.5 L681.6 792.3 L684.0 770.7 L687.4 786.8 L690.9 771.3 L692.9 781.3 L696.9 773.4 L700.4 781.1 L703.8 770.9 L706.5 790.4 L708.1 770.1 L710.3 792.3 L713.6 773.8 L716.2 778.8 L720.1 773.8 L722.6 793.1 L724.6 770.8 L726.6 785.0 L730.4 773.4 L733.1 784.4 L736.6 770.3 L739.7 779.3 L743.2 773.0 L745.9 793.9 L749.4 771.3 L752.9 778.1 L755.3 771.6 L759.2 783.0 L761.1 770.5 L763.0 779.4 L766.5 770.6 L770.1 777.9 L773.2 771.4 L776.1 794.9 L777.6 773.9 L780.8 787.0 L784.6 771.7 L788.3 781.0 L790.3 771.0 L792.5 792.7 L795.5 771.0 L798.1 794.9 L801.8 771.4 L804.5 785.8 L808.2 771.7 L812.0 787.5 L814.9 772.1 L816.4 788.7 L818.4 770.0 L821.9 794.1 L824.5 772.9 L827.4 791.0 L830.2 772.2 L833.7 795.4 L836.6 771.0 L838.8 782.1 L841.6 772.2 L845.0 779.3 L847.6 772.5 L850.3 787.3 L853.6 771.8 L856.4 787.9 L860.2 772.8 L863.9 778.7 L866.1 772.2 L869.9 780.7 L871.8 770.5 L874.4 796.0 L876.5 770.3 L879.7 781.8 L883.4 770.6 L886.7 784.3 L888.6 773.5 L892.5 793.1 L896.4 771.6 L899.1 777.7 L902.7 770.6 L905.2 787.2 L907.6 770.8 L909.9 783.1 L911.4 772.2 L914.0 797.1 L916.4 772.5 L919.1 796.2 L923.1 773.2 L927.0 795.4 L929.2 770.2 L932.6 792.1 L934.5 771.7 L938.2 781.1 L940.4 770.6 L944.2 786.1 L947.4 770.4 L949.1 783.7 L951.7 770.3 L955.5 784.8 L959.0 770.3 L962.6 796.2 L966.3 771.8 L968.6 786.4 L972.5 771.1 L974.3 787.0 L976.4 770.4 L978.3 796.5 L980.3 771.2 L982.6 782.3 L984.8 772.0 L986.7 790.6 L988.3 771.0 L989.8 782.8 L992.7 770.8 L995.4 778.8 L997.1 773.3 L999.7 787.6 L1003.3 771.6 L1006.1 783.7 L1010.0 771.4 L1013.6 783.4 L1016.7 771.6 L1019.1 796.4 L1020.9 770.3 L1024.2 792.4 L1026.2 770.3 L1029.8 780.1 L1032.9 771.1 L1035.0 791.6 L1037.7 770.6 L1040.3 792.2 L1044.2 773.9 L1047.1 792.6 L1051.0 771.2 L1053.4 797.5 L1055.8 771.9 L1058.6 793.5 L1061.4 770.0 L1063.5 795.7 L1066.0 770.2 L1067.6 791.4 L1069.6 772.3 L1072.5 782.5 L1075.6 772.9 L1079.3 789.7 L1081.6 773.9 L1083.5 783.0 L1086.6 770.2 L1090.2 779.7 L1093.3 772.9 L1096.8 794.7 L1099.6 772.0 L1103.2 781.4 L1106.8 772.3 L1110.5 783.8 L1113.7 770.9 L1115.3 794.8 L1117.7 770.4 L1121.3 786.3 L1124.4 772.5 L1127.6 787.7 L1129.1 773.2 L1132.4 787.4 L1135.3 772.6 L1136.9 782.8 L1139.1 770.3 L1141.2 782.9 L1143.3 773.0 L1147.2 787.6 L1149.7 771.9 L1152.9 782.2 L1155.9 772.6 L1157.6 794.6 L1159.7 773.0 L1162.0 786.1 L1163.5 770.2 L1165.7 784.1 L1168.9 772.7 L1171.2 787.2 L1173.8 771.9 L1175.6 779.6 L1177.6 773.9 L1181.4 797.1 L1184.1 773.3 L1188.0 788.5 L1190.2 770.8 L1194.1 793.3 L1197.0 770.6 L1199.8 778.4 L1201.6 773.3 L1204.4 779.8 L1207.7 770.9 L1211.4 787.8 L1213.0 770.0 L1215.7 788.5 L1218.0 770.6 L1220.3 791.2 L1223.9 770.0 L1227.3 780.7 L1229.1 773.7 L1232.4 779.5 L1234.6 771.5 L1237.1 777.5 L1240.1 771.4 L1242.6 792.0 L1244.3 770.4 L1247.8 791.8 L1251.7 771.0 L1253.8 787.3 L1255.8 771.5 L1259.7 779.8 L1263.2 772.5 L1267.0 778.7 L1269.9 772.9 L1271.5 782.9 L1274.2 773.0 L1277.3 791.8 L1278.9 773.7 L1280.7 788.1 L1283.1 771.2 L1286.4 778.0 L1288.6 772.6 L1290.8 786.4 L1293.3 770.7 L1295.2 793.3 L1299.0 772.0 L1301.0 779.4 L1305.0 771.8 L1306.9 793.7 L1308.6 771.4 L1310.3 792.7 L1312.5 772.3 L1316.2 782.5 L1318.7 771.7" fill="none" stroke="#d6368a" stroke-width="0.9"/>
<path d="M466.0 771.4 L468.3 796.6 L469.0 771.5 L471.4 797.3 L472.1 771.9 L474.6 797.4 L475.2 770.3 L477.7 796.8 L478.2 772.9 L480.8 796.8 L481.5 770.5 L483.5 797.0 L484.0 770.6 L486.2 797.5 L486.9 771.3 L489.4 797.0 L490.1 771.5 L492.5 797.0 L493.1 773.0 L495.7 796.7 L496.5 770.9 L498.7 797.2 L499.2 772.3 L501.4 796.7 L502.1 772.9 L504.6 797.5 L505.2 772.7 L507.5 796.5 L508.1 770.2 L510.5 796.7 L511.1 770.3 L513.3 796.5 L514.1 770.4 L516.2 797.4 L516.8 772.4 L518.9 796.9 L519.6 770.6 L522.0 797.4 L522.8 770.3 L525.0 797.3 L525.6 772.9 L528.1 797.2 L529.0 770.6 L531.2 796.6 L531.9 770.3 L534.5 797.3 L535.1 772.3 L537.3 797.2 L537.9 770.3 L540.2 797.3 L541.0 771.1 L543.2 796.5 L543.9 771.7 L546.4 797.3 L547.0 772.7 L549.5 797.3 L550.1 772.2 L552.6 797.3 L553.5 772.6 L555.9 797.1 L556.4 770.1 L559.0 797.3 L559.8 770.8 L562.3 796.9 L562.9 770.5 L565.3 797.4 L565.9 771.7 L568.4 796.9 L569.0 772.8 L571.2 797.5 L571.8 771.3 L573.8 797.3 L574.5 771.7 L576.5 797.1 L577.4 772.9 L579.8 796.8 L580.5 770.4 L582.5 797.5 L583.4 772.1 L586.0 797.5 L586.7 771.4 L589.2 797.2 L590.1 770.2 L592.4 796.8 L593.3 772.2 L595.7 796.7 L596.5 771.1 L599.0 796.6 L599.8 771.3 L602.3 796.6 L603.0 771.9 L605.2 796.9 L606.0 770.2 L608.4 796.5 L609.2 772.2 L611.5 796.8 L612.2 771.3 L614.7 797.4 L615.5 770.1 L617.8 797.0 L618.4 772.1 L620.7 796.9 L621.6 770.8 L623.6 797.2 L624.4 770.6 L626.5 796.6 L627.2 771.3 L629.8 797.2 L630.6 770.6 L632.8 796.7 L633.7 772.6 L635.9 796.9 L636.5 770.4 L638.8 796.7 L639.7 772.1 L642.2 797.2 L642.8 771.4 L645.0 797.3 L645.6 771.9 L647.9 797.2 L648.8 772.9 L651.0 797.4 L651.6 772.6 L653.6 796.8 L654.3 770.9 L656.8 797.5 L657.3 771.4 L659.4 796.7 L659.9 770.4 L662.0 796.9 L662.7 771.9 L665.0 796.7 L665.9 772.1 L668.0 797.0 L668.6 770.0 L670.9 796.8 L671.5 770.8 L673.7 796.8 L674.4 771.8 L676.8 797.1 L677.7 772.7 L679.7 796.6 L680.5 770.4 L682.8 796.9 L683.6 771.1 L686.0 796.6 L686.8 772.8 L689.1 796.8 L689.7 772.2 L692.2 796.9 L692.9 770.6 L695.5 796.5 L696.4 771.6 L698.8 797.2 L699.7 772.6 L701.9 797.4 L702.6 771.7 L705.1 797.0 L705.6 772.4 L707.6 796.7 L708.2 771.0 L710.6 797.4 L711.2 771.5 L713.6 796.7 L714.4 772.8 L716.7 796.6 L717.2 770.7 L719.6 797.2 L720.4 771.9 L722.7 796.7 L723.4 770.9 L725.6 796.7 L726.5 770.6 L729.0 796.5 L729.7 771.7 L731.8 797.0 L732.5 771.8 L734.5 796.5 L735.2 771.2 L737.7 796.9 L738.4 772.1 L740.5 797.0 L741.1 772.9 L743.7 797.2 L744.4 770.4 L746.6 796.7 L747.5 771.4 L749.7 797.3 L750.4 772.8 L752.5 796.7 L753.0 770.6 L755.1 796.8 L755.8 771.1 L758.2 797.4 L758.9 770.4 L761.2 797.2 L761.8 771.6 L764.1 797.1 L764.8 771.6 L766.9 797.3 L767.6 771.9 L769.9 796.6 L770.7 772.6 L772.8 796.8 L773.6 772.7 L775.8 797.2 L776.7 770.7 L779.3 796.6 L779.8 770.7 L782.3 797.2 L782.8 772.5 L785.1 796.7 L785.6 771.2 L788.0 797.5 L788.6 772.0 L791.2 796.5 L791.7 771.5 L794.2 797.0 L794.9 770.6 L797.0 797.4 L797.5 771.7 L799.8 796.9 L800.4 770.6 L802.5 796.7 L803.4 772.8 L805.4 797.4 L806.3 771.4 L808.8 797.2 L809.5 771.5 L811.7 796.9 L812.2 772.1 L814.7 797.3 L815.4 772.2 L817.7 797.3 L818.2 771.5 L820.2 796.6 L821.1 772.1 L823.6 796.9 L824.2 771.8 L826.5 796.5 L827.4 770.8 L829.9 796.8 L830.7 772.4 L833.0 796.6 L833.8 772.1 L836.3 796.7 L836.9 772.2 L839.0 797.2 L839.7 770.0 L841.9 796.9 L842.6 770.7 L845.2 796.8 L845.8 772.0 L848.2 797.0 L848.8 773.0 L851.2 796.8 L852.0 772.9 L854.0 796.9 L854.8 770.8 L857.1 797.4 L857.6 771.1 L859.7 797.2 L860.6 771.7 L862.9 796.5 L863.6 773.0 L866.0 796.7 L866.5 771.8 L869.0 797.5 L869.8 770.5 L872.1 797.3 L872.8 771.8 L874.9 796.6 L875.5 771.6 L877.9 797.1 L878.5 772.0 L880.8 797.2 L881.6 770.9 L883.6 797.3 L884.1 770.5 L886.6 797.1 L887.5 772.2 L889.5 796.5 L890.4 770.2 L892.9 797.1 L893.6 772.9 L895.7 797.0 L896.6 772.2 L898.9 796.5 L899.7 771.8 L901.8 796.9 L902.5 770.6 L904.5 797.0 L905.1 771.3 L907.5 797.0 L908.1 771.7 L910.3 796.7 L911.0 773.0 L913.6 796.8 L914.2 770.3 L916.7 796.7 L917.5 771.1 L919.6 796.8 L920.4 771.8 L922.7 796.7 L923.3 770.7 L925.9 796.6 L926.8 770.1 L928.8 797.2 L929.5 771.9 L931.5 797.0 L932.1 770.3 L934.5 796.9 L935.2 771.1 L937.5 797.3 L938.1 772.2 L940.6 797.4 L941.2 772.4 L943.6 796.7 L944.2 771.3 L946.3 796.7 L947.0 772.0 L949.5 797.2 L950.3 772.2 L952.8 797.1 L953.5 770.3 L956.0 797.4 L956.5 771.7 L958.8 796.8 L959.4 772.3 L961.5 797.3 L962.2 770.2 L964.4 796.8 L965.2 770.8 L967.3 797.1 L968.1 771.1 L970.2 796.8 L970.9 772.8 L973.4 796.6 L974.1 772.4 L976.3 797.2 L977.0 772.8 L979.5 797.3 L980.1 771.1 L982.4 797.1 L983.0 770.6 L985.4 796.7 L986.1 772.5 L988.4 797.3 L989.2 772.6 L991.4 797.5 L992.1 771.6 L994.4 796.5 L995.2 772.4 L997.2 797.0 L998.0 770.3 L1000.1 796.8 L1001.0 770.3 L1003.3 797.4 L1004.1 771.9 L1006.3 797.3 L1007.1 771.6 L1009.5 797.1 L1010.2 772.9 L1012.6 797.0 L1013.3 772.2 L1015.7 796.6 L1016.4 772.5 L1018.8 796.6 L1019.6 772.5 L1022.1 796.5 L1022.9 771.6 L1025.3 796.7 L1026.0 771.3 L1028.1 796.8 L1029.0 771.1 L1031.1 797.3 L1031.7 770.9 L1034.3 797.4 L1035.0 770.3 L1037.3 796.7 L1037.9 770.2 L1040.2 796.9 L1041.1 770.1 L1043.1 797.3 L1043.7 770.7 L1046.1 796.9 L1046.7 770.6 L1048.9 797.3 L1049.7 770.9 L1052.0 796.7 L1052.7 770.8 L1055.2 796.6 L1055.9 771.6 L1058.5 797.0 L1059.0 770.1 L1061.6 796.7 L1062.3 771.6 L1064.6 797.2 L1065.5 772.0 L1067.6 797.5 L1068.3 771.1 L1070.8 796.8 L1071.5 770.5 L1073.6 797.2 L1074.2 772.6 L1076.5 796.9 L1077.4 770.8 L1079.8 797.3 L1080.6 770.0 L1083.1 796.7 L1083.9 770.2 L1086.0 796.8 L1086.6 771.4 L1088.9 796.5 L1089.6 772.6 L1091.8 796.7 L1092.4 772.8 L1094.5 796.7 L1095.1 771.6 L1097.4 797.3 L1098.2 770.9 L1100.4 797.4 L1101.0 771.4 L1103.5 797.1 L1104.2 770.3 L1106.5 797.0 L1107.4 772.5 L1109.8 797.5 L1110.4 772.1 L1112.6 796.9 L1113.2 770.0 L1115.8 796.7 L1116.4 771.8 L1118.6 797.1 L1119.3 770.9 L1121.5 797.1 L1122.3 770.8 L1124.4 796.8 L1125.0 772.8 L1127.4 796.8 L1128.0 772.5 L1130.1 797.4 L1130.6 772.0 L1133.0 797.3 L1133.7 772.5 L1136.0 797.4 L1136.6 770.5 L1138.7 797.1 L1139.2 772.8 L1141.5 797.0 L1142.2 772.3 L1144.7 797.1 L1145.4 771.2 L1147.4 797.1 L1148.2 772.9 L1150.6 796.8 L1151.4 770.1 L1153.6 797.2 L1154.3 770.3 L1156.6 797.0 L1157.4 772.5 L1159.7 797.3 L1160.5 772.7 L1162.9 797.1 L1163.6 770.4 L1166.0 796.5 L1166.7 772.1 L1169.2 797.3 L1170.1 771.9 L1172.2 797.4 L1172.8 771.7 L1175.2 797.2 L1176.1 771.1 L1178.4 797.4 L1179.3 770.4 L1181.8 797.0 L1182.5 771.7 L1184.7 796.6 L1185.6 772.5 L1187.9 797.4 L1188.8 770.9 L1191.3 797.3 L1192.0 772.5 L1194.2 797.0 L1194.7 770.1 L1196.8 796.5 L1197.7 772.0 L1199.9 796.8 L1200.7 771.1 L1203.0 796.7 L1203.5 770.6 L1205.8 797.4 L1206.4 771.7 L1208.6 797.0 L1209.2 771.7 L1211.4 796.9 L1211.9 772.0 L1214.0 796.5 L1214.7 771.4 L1216.9 796.9 L1217.7 772.3 L1220.2 797.0 L1221.1 772.5 L1223.6 797.1 L1224.3 771.7 L1226.8 797.0 L1227.5 771.3 L1230.1 797.2 L1230.6 772.2 L1233.1 796.8 L1233.9 772.3 L1236.0 796.9 L1236.6 770.4 L1238.8 797.0 L1239.5 770.2 L1241.9 797.0 L1242.5 770.9 L1244.7 797.3 L1245.3 772.7 L1247.8 796.8 L1248.7 771.3 L1251.2 797.3 L1252.0 771.7 L1254.5 797.4 L1255.3 770.4 L1257.7 796.5 L1258.2 770.7 L1260.3 797.2 L1260.9 772.7 L1263.4 797.1 L1264.0 771.8 L1266.0 797.5 L1266.9 770.9 L1269.2 796.6 L1270.1 771.4 L1272.2 797.2 L1273.1 772.7 L1275.2 796.7 L1275.8 771.4 L1277.9 796.6 L1278.8 770.6 L1281.2 797.3 L1282.1 770.2 L1284.1 796.8 L1284.7 772.7 L1287.3 796.8 L1287.8 772.1 L1290.4 797.1 L1290.9 770.7 L1293.1 796.8 L1293.7 770.5 L1295.8 796.8 L1296.6 771.1 L1299.0 796.6 L1299.8 770.7 L1301.9 796.6 L1302.7 770.8 L1305.1 797.4 L1306.0 771.3 L1308.3 797.0 L1308.8 771.8 L1311.0 797.2 L1311.8 770.3 L1314.0 796.7 L1314.6 770.8 L1316.9 797.3 L1317.8 773.0" fill="none" stroke="#52a83e" stroke-width="0.9"/></svg>
<svg style="left:674px;top:768px;" width="4" height="31" viewBox="0 0 4 31"><path d="M2 0 L2 31" stroke="#222" stroke-width="1.6" stroke-dasharray="4 1.5"/></svg>
<div style="left:1189px;top:768px;width:1px;height:30px;background:#555;"></div>
<div style="left:1320px;top:767px;width:1.5px;height:46px;background:#333;"></div>
<div style="left:1317px;top:775px;width:5px;height:17px;background:#222;border-radius:1px;"></div>
<div style="left:1319px;top:801px;width:3px;height:7px;background:#999;"></div>
<div style="left:466px;top:811px;width:856px;height:2px;background:#666;"></div>
<div style="left:466px;top:811px;width:1px;height:5px;background:#666;"></div>
<div style="left:1321px;top:811px;width:1px;height:5px;background:#666;"></div>
<div style="left:477px;top:811px;width:1px;height:5px;background:#666;"></div>
<span id="ml_Nov" class="t" style="left:476.7px;top:816.42px;font-size:10.80px;color:#3a3a3a;font-weight:400;font-family:'Liberation Sans',sans-serif;transform:translateX(-50%) ">Nov</span>
<div style="left:617px;top:811px;width:1px;height:5px;background:#666;"></div>
<span id="ml_Dec" class="t" style="left:616.7px;top:816.42px;font-size:10.80px;color:#3a3a3a;font-weight:400;font-family:'Liberation Sans',sans-serif;transform:translateX(-50%) ">Dec</span>
<div style="left:762px;top:811px;width:1px;height:5px;background:#666;"></div>
<span id="ml_2024" class="t" style="left:761.7px;top:816.42px;font-size:10.80px;color:#3a3a3a;font-weight:400;font-family:'Liberation Sans',sans-serif;transform:translateX(-50%) ">2024</span>
<div style="left:907px;top:811px;width:1px;height:5px;background:#666;"></div>
<span id="ml_Feb" class="t" style="left:906.7px;top:816.42px;font-size:10.80px;color:#3a3a3a;font-weight:400;font-family:'Liberation Sans',sans-serif;transform:translateX(-50%) ">Feb</span>
<div style="left:1042px;top:811px;width:1px;height:5px;background:#666;"></div>
<span id="ml_Mar" class="t" style="left:1042.3px;top:816.42px;font-size:10.80px;color:#3a3a3a;font-weight:400;font-family:'Liberation Sans',sans-serif;transform:translateX(-50%) ">Mar</span>
<div style="left:1187px;top:811px;width:1px;height:5px;background:#666;"></div>
<span id="ml_Apr" class="t" style="left:1186.7px;top:816.42px;font-size:10.80px;color:#3a3a3a;font-weight:400;font-family:'Liberation Sans',sans-serif;transform:translateX(-50%) ">Apr</span>
</body></html>
